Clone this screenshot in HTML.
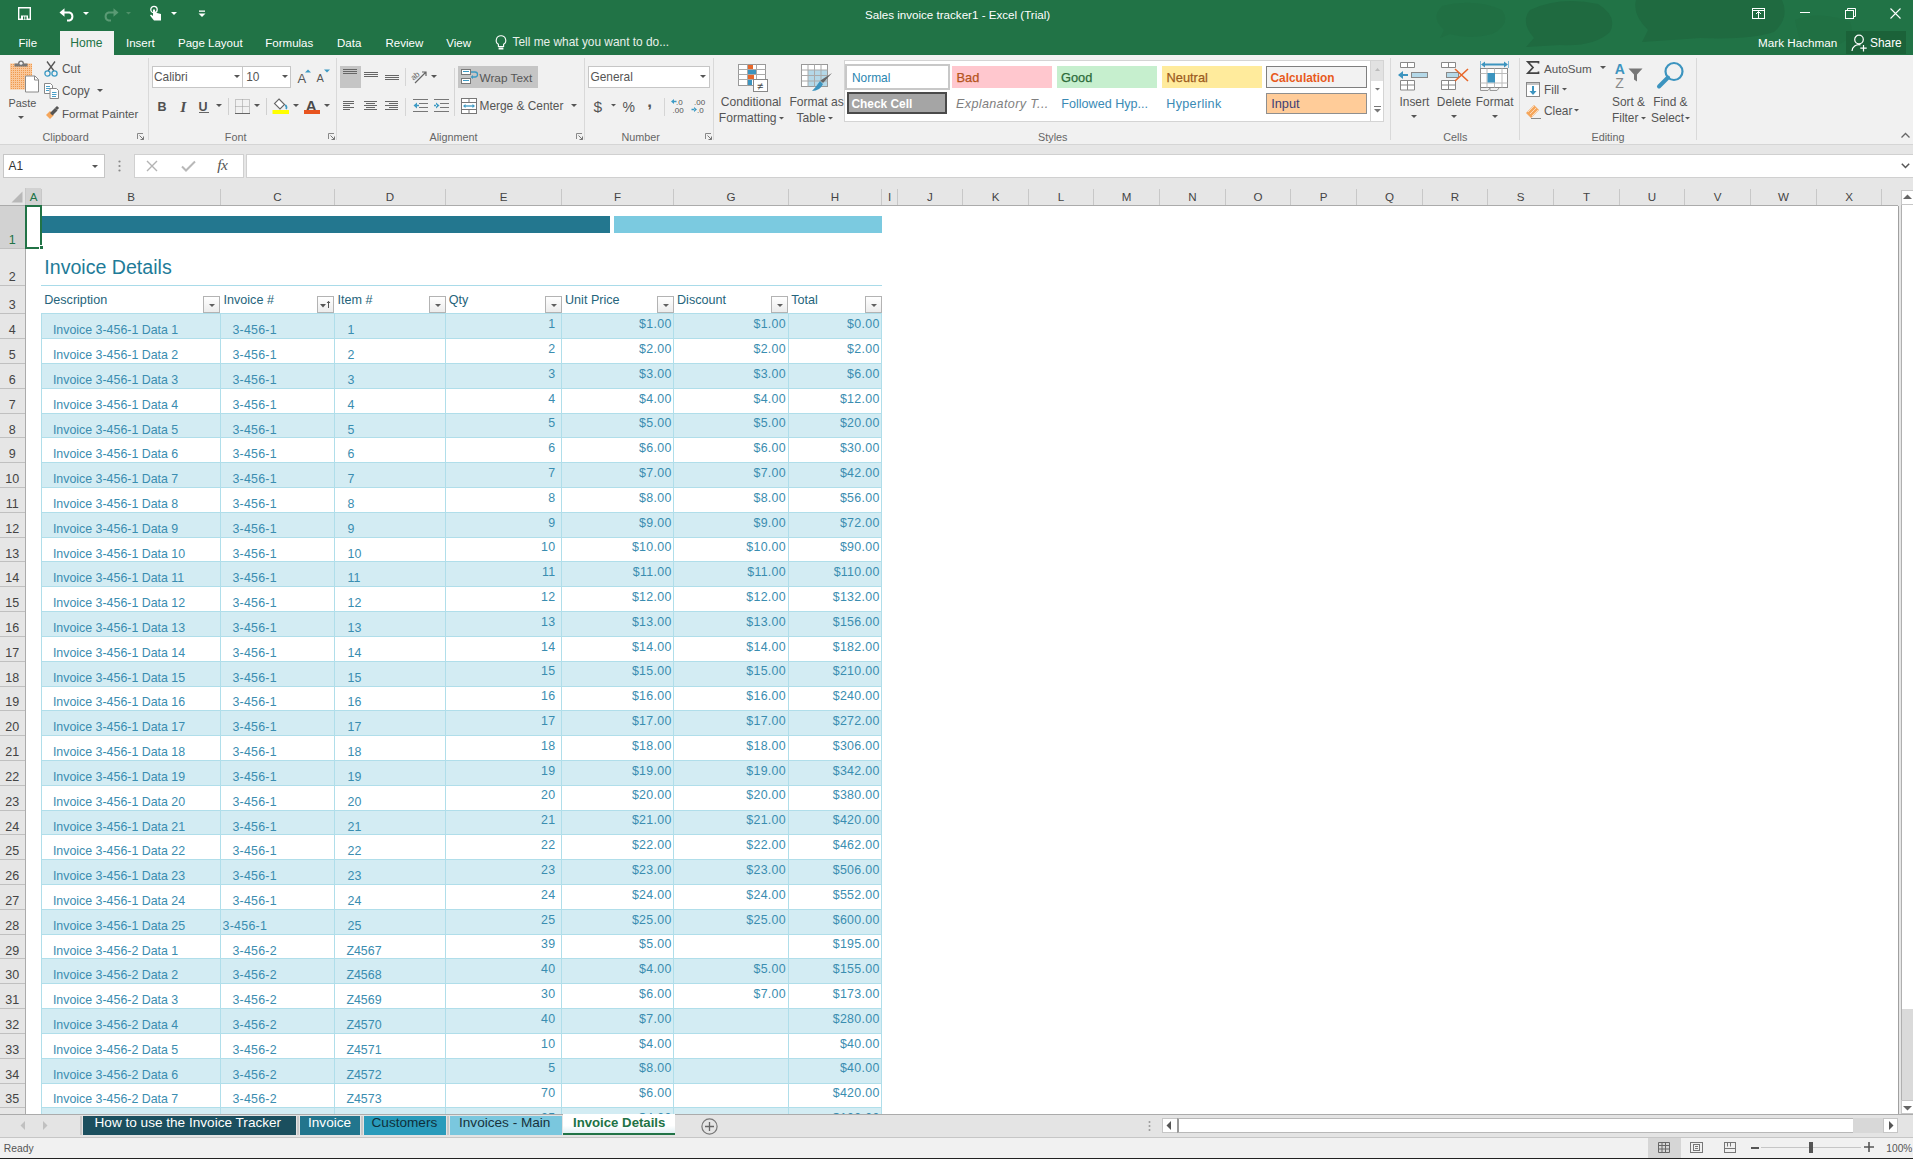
<!DOCTYPE html>
<html><head><meta charset="utf-8"><title>Excel</title>
<style>
html,body{margin:0;padding:0;}
body{width:1913px;height:1159px;position:relative;overflow:hidden;background:#fff;font-family:"Liberation Sans",sans-serif;}
.t{position:absolute;white-space:nowrap;}
.b{position:absolute;box-sizing:border-box;}
.s{position:absolute;overflow:visible;}
</style></head><body>
<div class="b" style="left:0px;top:0px;width:1913px;height:55px;background:#217346;"></div>
<svg class="s" style="left:1380px;top:0px" width="533" height="55" viewBox="0 0 533 55"><g fill="#1f6a40"><path d="M62 6Q95 -2 122 10Q132 24 112 34Q90 40 70 34L60 38L64 30Q50 18 62 6Z" opacity="0.45"/><path d="M150 10Q180 -4 218 4Q238 16 230 32Q214 47 180 45L146 47L154 38Q140 22 150 10Z" opacity="1"/><path d="M256 0H402Q410 18 394 32Q370 40 320 38L262 42L268 30Q252 14 256 0Z" opacity="1"/><path d="M415 20Q440 10 470 22Q476 36 460 44Q440 50 420 42Z" opacity="0.35"/></g></svg>
<svg class="s" style="left:18px;top:7px;" width="13" height="13" viewBox="0 0 13 13"><path d="M0.7 0.7H12.3V12.3H0.7Z" fill="none" stroke="#fff" stroke-width="1.4"/><rect x="3" y="8.5" width="7" height="4" fill="#fff"/><rect x="5" y="9.5" width="1.3" height="3" fill="#217346"/><rect x="7.2" y="9.5" width="1.3" height="3" fill="#217346"/></svg>
<svg class="s" style="left:59px;top:7px;" width="16" height="14" viewBox="0 0 16 14"><path d="M3 5.5H10.5A4.2 4.2 0 0 1 10.5 13.5H8" fill="none" stroke="#fff" stroke-width="2"/><path d="M0.5 5.5L5.5 1.2V9.8Z" fill="#fff"/></svg>
<svg class="s" style="left:82.5px;top:11.5px;" width="6" height="4" viewBox="0 0 6 4"><path d="M0 0H6L3 3Z" fill="#fff"/></svg>
<svg class="s" style="left:103px;top:7px;" width="16" height="14" viewBox="0 0 16 14"><path d="M13 5.5H5.5A4.2 4.2 0 0 0 5.5 13.5H8" fill="none" stroke="#5a9a74" stroke-width="2"/><path d="M15.5 5.5L10.5 1.2V9.8Z" fill="#5a9a74"/></svg>
<svg class="s" style="left:125.5px;top:11.75px;" width="5.0" height="3.5" viewBox="0 0 5.0 3.5"><path d="M0 0H5.0L2.5 2.5Z" fill="#4f9068"/></svg>
<svg class="s" style="left:149px;top:5px;" width="13" height="16" viewBox="0 0 13 16"><circle cx="5" cy="4.5" r="3.2" fill="none" stroke="#fff" stroke-width="1.3"/><path d="M4 4.5V11L2 9.5L1 10.5L5 15.5H12V9L6 7.5V4.5Z" fill="#fff"/></svg>
<svg class="s" style="left:170.5px;top:11.5px;" width="6" height="4" viewBox="0 0 6 4"><path d="M0 0H6L3 3Z" fill="#fff"/></svg>
<svg class="s" style="left:198px;top:10px;" width="8" height="8" viewBox="0 0 8 8"><rect x="1" y="0.5" width="6" height="1.3" fill="#fff"/><path d="M0.5 3.5H7.5L4 7Z" fill="#fff"/></svg>
<div class="t " style="left:865.00px;top:9.18px;font-size:11.6px;line-height:11.6px;color:#fff;">Sales invoice tracker1 - Excel (Trial)</div>
<svg class="s" style="left:1752px;top:8px;" width="13" height="11" viewBox="0 0 13 11"><rect x="0.5" y="0.5" width="12" height="10" fill="none" stroke="#fff" stroke-width="1"/><path d="M0.5 2.5H12.5M6.5 3.5V10.5M4 6L6.5 3.5L9 6" fill="none" stroke="#fff" stroke-width="1"/></svg>
<div class="b" style="left:1800px;top:12px;width:10px;height:1px;background:#fff;"></div>
<svg class="s" style="left:1845px;top:8px;" width="11" height="11" viewBox="0 0 11 11"><path d="M2.5 2.5V0.5H10.5V8.5H8.5" fill="none" stroke="#fff"/><rect x="0.5" y="2.5" width="8" height="8" fill="none" stroke="#fff"/></svg>
<svg class="s" style="left:1890px;top:8px;" width="11" height="11" viewBox="0 0 11 11"><path d="M0.5 0.5L10.5 10.5M10.5 0.5L0.5 10.5" stroke="#fff" stroke-width="1.1"/></svg>
<div class="b" style="left:60px;top:31px;width:54px;height:24px;background:#f1f1f1;"></div>
<div class="t " style="left:18.50px;top:37.57px;font-size:11.5px;line-height:11.5px;color:#fff;">File</div>
<div class="t " style="left:70.30px;top:37.06px;font-size:12.1px;line-height:12.1px;color:#217346;">Home</div>
<div class="t " style="left:126.00px;top:37.57px;font-size:11.5px;line-height:11.5px;color:#fff;">Insert</div>
<div class="t " style="left:178.00px;top:37.57px;font-size:11.5px;line-height:11.5px;color:#fff;">Page Layout</div>
<div class="t " style="left:265.30px;top:37.57px;font-size:11.5px;line-height:11.5px;color:#fff;">Formulas</div>
<div class="t " style="left:337.00px;top:37.57px;font-size:11.5px;line-height:11.5px;color:#fff;">Data</div>
<div class="t " style="left:385.50px;top:37.57px;font-size:11.5px;line-height:11.5px;color:#fff;">Review</div>
<div class="t " style="left:446.30px;top:37.57px;font-size:11.5px;line-height:11.5px;color:#fff;">View</div>
<svg class="s" style="left:495px;top:35px;" width="12" height="16" viewBox="0 0 12 16"><path d="M6 0.8A4.6 4.6 0 0 0 3.4 9.3V11.5H8.6V9.3A4.6 4.6 0 0 0 6 0.8Z" fill="none" stroke="#fff" stroke-width="1.1"/><rect x="3.6" y="12.5" width="4.8" height="2" fill="#fff"/></svg>
<div class="t " style="left:512.50px;top:36.93px;font-size:11.9px;line-height:11.9px;color:#e8f0ea;">Tell me what you want to do...</div>
<div class="t " style="left:1758.00px;top:37.10px;font-size:11.7px;line-height:11.7px;color:#fff;">Mark Hachman</div>
<div class="b" style="left:1846px;top:31px;width:60px;height:23px;background:#1b6239;"></div>
<svg class="s" style="left:1851px;top:34px;" width="17" height="18" viewBox="0 0 17 18"><circle cx="8" cy="5.5" r="4.3" fill="none" stroke="#fff" stroke-width="1.2"/><path d="M1 17A7 6.5 0 0 1 9.5 10.8" fill="none" stroke="#fff" stroke-width="1.2"/><path d="M12.5 11V17.5M9.3 14.2H15.7" stroke="#fff" stroke-width="1.2"/></svg>
<div class="t " style="left:1870.00px;top:37.93px;font-size:11.9px;line-height:11.9px;color:#fff;">Share</div>
<div class="b" style="left:0px;top:55px;width:1913px;height:90px;background:#f1f1f1;"></div>
<div class="b" style="left:0px;top:144px;width:1913px;height:1px;background:#d5d5d5;"></div>
<div class="b" style="left:148px;top:58px;width:1px;height:82px;background:#d9d9d9;"></div>
<div class="b" style="left:336px;top:58px;width:1px;height:82px;background:#d9d9d9;"></div>
<div class="b" style="left:584px;top:58px;width:1px;height:82px;background:#d9d9d9;"></div>
<div class="b" style="left:713px;top:58px;width:1px;height:82px;background:#d9d9d9;"></div>
<div class="b" style="left:1390px;top:58px;width:1px;height:82px;background:#d9d9d9;"></div>
<div class="b" style="left:1519px;top:58px;width:1px;height:82px;background:#d9d9d9;"></div>
<div class="b" style="left:1696px;top:58px;width:1px;height:82px;background:#d9d9d9;"></div>
<div class="t " style="left:42.50px;top:131.86px;font-size:10.8px;line-height:10.8px;color:#666;">Clipboard</div>
<div class="t " style="left:224.80px;top:131.86px;font-size:10.8px;line-height:10.8px;color:#666;">Font</div>
<div class="t " style="left:429.50px;top:131.86px;font-size:10.8px;line-height:10.8px;color:#666;">Alignment</div>
<div class="t " style="left:621.40px;top:131.86px;font-size:10.8px;line-height:10.8px;color:#666;">Number</div>
<div class="t " style="left:1038.10px;top:131.86px;font-size:10.8px;line-height:10.8px;color:#666;">Styles</div>
<div class="t " style="left:1443.30px;top:131.86px;font-size:10.8px;line-height:10.8px;color:#666;">Cells</div>
<div class="t " style="left:1591.50px;top:131.86px;font-size:10.8px;line-height:10.8px;color:#666;">Editing</div>
<svg class="s" style="left:136.5px;top:132.5px;" width="7" height="7" viewBox="0 0 7 7"><path d="M0.5 6V0.5H6" fill="none" stroke="#888" stroke-width="1"/><path d="M2.5 2.5L6.5 6.5M6.5 3.5V6.5H3.5" fill="none" stroke="#777" stroke-width="1"/></svg>
<svg class="s" style="left:327.5px;top:132.5px;" width="7" height="7" viewBox="0 0 7 7"><path d="M0.5 6V0.5H6" fill="none" stroke="#888" stroke-width="1"/><path d="M2.5 2.5L6.5 6.5M6.5 3.5V6.5H3.5" fill="none" stroke="#777" stroke-width="1"/></svg>
<svg class="s" style="left:575.5px;top:132.5px;" width="7" height="7" viewBox="0 0 7 7"><path d="M0.5 6V0.5H6" fill="none" stroke="#888" stroke-width="1"/><path d="M2.5 2.5L6.5 6.5M6.5 3.5V6.5H3.5" fill="none" stroke="#777" stroke-width="1"/></svg>
<svg class="s" style="left:704.5px;top:132.5px;" width="7" height="7" viewBox="0 0 7 7"><path d="M0.5 6V0.5H6" fill="none" stroke="#888" stroke-width="1"/><path d="M2.5 2.5L6.5 6.5M6.5 3.5V6.5H3.5" fill="none" stroke="#777" stroke-width="1"/></svg>
<svg class="s" style="left:9px;top:60px" width="30" height="33" viewBox="0 0 30 33"><defs><pattern id="dots" width="2" height="2" patternUnits="userSpaceOnUse"><rect width="2" height="2" fill="#f9c79a"/><rect width="1" height="1" fill="#f09a4e"/></pattern></defs><rect x="1" y="3.5" width="22" height="26" fill="url(#dots)"/><path d="M5.5 6.5V3.5H9A3 3 0 0 1 15 3.5H18.5V6.5Z" fill="#777"/><circle cx="12" cy="3.2" r="1.5" fill="#f1f1f1"/><path d="M16.5 16H26L29.5 19.5V32H16.5Z" fill="#fff" stroke="#8a8a8a" stroke-width="1"/><path d="M25.5 16V20H29.5" fill="none" stroke="#8a8a8a" stroke-width="1"/></svg>
<div class="t " style="left:8.40px;top:97.57px;font-size:10.9px;line-height:10.9px;color:#555555;">Paste</div>
<svg class="s" style="left:18px;top:115.5px;" width="6" height="4" viewBox="0 0 6 4"><path d="M0 0H6L3 3Z" fill="#555"/></svg>
<svg class="s" style="left:44px;top:61px;" width="14" height="16" viewBox="0 0 14 16"><path d="M3 0.5L10 10M11 0.5L4 10" stroke="#555" stroke-width="1.3" fill="none"/><circle cx="3.5" cy="12.5" r="2.6" fill="none" stroke="#3c9ac4" stroke-width="1.3"/><circle cx="10.5" cy="12.5" r="2.6" fill="none" stroke="#3c9ac4" stroke-width="1.3"/></svg>
<div class="t " style="left:62.00px;top:64.03px;font-size:11.9px;line-height:11.9px;color:#555555;">Cut</div>
<svg class="s" style="left:44px;top:83px;" width="15" height="16" viewBox="0 0 15 16"><path d="M0.5 0.5H6.5L8.5 2.5V10.5H0.5Z" fill="#fff" stroke="#888"/><path d="M6 5.5H12.5L14.5 7.5V15.5H6Z" fill="#fff" stroke="#888"/><path d="M2 3.5H6M2 5.5H6M2 7.5H5M8 9.5H12.5M8 11.5H12.5M8 13.5H12" stroke="#4a9fc8" stroke-width="1"/></svg>
<div class="t " style="left:62.00px;top:86.03px;font-size:11.9px;line-height:11.9px;color:#555555;">Copy</div>
<svg class="s" style="left:96.7px;top:89.1px;" width="6" height="4" viewBox="0 0 6 4"><path d="M0 0H6L3 3Z" fill="#555"/></svg>
<svg class="s" style="left:45px;top:106px;" width="14" height="14" viewBox="0 0 14 14"><path d="M1 9L5 5L9 9L5 13Z" fill="#f5a65b"/><path d="M5 7L10 2L12.5 4.5L7.5 9.5Z" fill="#555"/><rect x="10.5" y="0.5" width="3" height="3" fill="#555" transform="rotate(45 12 2)"/></svg>
<div class="t " style="left:62.00px;top:109.22px;font-size:11.55px;line-height:11.55px;color:#555555;">Format Painter</div>
<div class="b" style="left:152px;top:66px;width:91px;height:22px;background:#fff;border:1px solid #c6c6c6;"></div>
<div class="b" style="left:242px;top:66px;width:49px;height:22px;background:#fff;border:1px solid #c6c6c6;"></div>
<div class="t " style="left:154.00px;top:72.43px;font-size:11.9px;line-height:11.9px;color:#555555;">Calibri</div>
<svg class="s" style="left:233.7px;top:74.7px;" width="6" height="4" viewBox="0 0 6 4"><path d="M0 0H6L3 3Z" fill="#555"/></svg>
<div class="t " style="left:246.20px;top:72.43px;font-size:11.9px;line-height:11.9px;color:#555555;">10</div>
<svg class="s" style="left:281.7px;top:74.7px;" width="6" height="4" viewBox="0 0 6 4"><path d="M0 0H6L3 3Z" fill="#555"/></svg>
<div class="t " style="left:297.50px;top:71.80px;font-size:13px;line-height:13px;color:#555;">A</div>
<svg class="s" style="left:305px;top:69px;" width="6" height="4" viewBox="0 0 6 4"><path d="M0 3.5H6L3 0.5Z" fill="#3c9ac4"/></svg>
<div class="t " style="left:316.50px;top:73.49px;font-size:11px;line-height:11px;color:#555;">A</div>
<svg class="s" style="left:324px;top:69px;" width="6" height="4" viewBox="0 0 6 4"><path d="M0 0.5H6L3 3.5Z" fill="#3c9ac4"/></svg>
<div class="t " style="left:157.50px;top:100.72px;font-size:12.5px;line-height:12.5px;color:#505050;font-weight:bold;">B</div>
<div class="t " style="left:180.30px;top:98.68px;font-size:15.5px;line-height:15.5px;color:#505050;font-weight:bold;font-family:'Liberation Serif',serif;font-style:italic;">I</div>
<div class="t " style="left:198.50px;top:100.72px;font-size:12.5px;line-height:12.5px;color:#505050;font-weight:bold;">U</div>
<div class="b" style="left:198.5px;top:112px;width:10px;height:1px;background:#666;"></div>
<svg class="s" style="left:216.2px;top:104.0px;" width="6" height="4" viewBox="0 0 6 4"><path d="M0 0H6L3 3Z" fill="#555"/></svg>
<div class="b" style="left:228px;top:98px;width:1px;height:17px;background:#d0d0d0;"></div>
<svg class="s" style="left:235px;top:99px;" width="15" height="15" viewBox="0 0 15 15"><rect x="0.5" y="0.5" width="14" height="14" fill="none" stroke="#999" stroke-dasharray="1 1"/><path d="M7.5 0.5V14.5M0.5 7.5H14.5" stroke="#999" stroke-dasharray="1 1"/><path d="M0 14.5H15" stroke="#666"/></svg>
<svg class="s" style="left:254.39999999999998px;top:104.0px;" width="6" height="4" viewBox="0 0 6 4"><path d="M0 0H6L3 3Z" fill="#555"/></svg>
<div class="b" style="left:266px;top:98px;width:1px;height:17px;background:#d0d0d0;"></div>
<svg class="s" style="left:272px;top:97px;" width="18" height="18" viewBox="0 0 18 18"><path d="M7 2L12.5 7.5L8 12L2.5 6.5Z" fill="#fff" stroke="#666" stroke-width="1.1"/><path d="M13.2 7.8Q15.5 10 14 12" fill="none" stroke="#3c9ac4" stroke-width="1.6"/><rect x="0.5" y="13" width="16.5" height="4" fill="#ffff00"/></svg>
<svg class="s" style="left:293px;top:104.0px;" width="6" height="4" viewBox="0 0 6 4"><path d="M0 0H6L3 3Z" fill="#555"/></svg>
<div class="t " style="left:305.80px;top:97.70px;font-size:15px;line-height:15px;color:#4a4a4a;font-weight:bold;">A</div>
<div class="b" style="left:304px;top:110px;width:16px;height:4px;background:#e8541f;"></div>
<svg class="s" style="left:324px;top:104.0px;" width="6" height="4" viewBox="0 0 6 4"><path d="M0 0H6L3 3Z" fill="#555"/></svg>
<div class="b" style="left:340px;top:66px;width:21px;height:22px;background:#c5c5c5;"></div>
<svg class="s" style="left:343px;top:69px;" width="16" height="7" viewBox="0 0 16 7"><rect x="0" y="0" width="14" height="1" fill="#666"/><rect x="0" y="2" width="14" height="1" fill="#666"/><rect x="0" y="4" width="14" height="1" fill="#666"/></svg>
<svg class="s" style="left:364px;top:72px;" width="16" height="7" viewBox="0 0 16 7"><rect x="0" y="0" width="14" height="1" fill="#666"/><rect x="0" y="2" width="14" height="1" fill="#666"/><rect x="0" y="4" width="14" height="1" fill="#666"/></svg>
<svg class="s" style="left:385px;top:75px;" width="16" height="7" viewBox="0 0 16 7"><rect x="0" y="0" width="14" height="1" fill="#666"/><rect x="0" y="2" width="14" height="1" fill="#666"/><rect x="0" y="4" width="14" height="1" fill="#666"/></svg>
<svg class="s" style="left:343px;top:101px;" width="16" height="11" viewBox="0 0 16 11"><rect x="0" y="0" width="11" height="1" fill="#666"/><rect x="0" y="2" width="11" height="1" fill="#666"/><rect x="0" y="4" width="7" height="1" fill="#666"/><rect x="0" y="6" width="11" height="1" fill="#666"/><rect x="0" y="8" width="7" height="1" fill="#666"/></svg>
<svg class="s" style="left:364px;top:101px;" width="16" height="11" viewBox="0 0 16 11"><rect x="0" y="0" width="13" height="1" fill="#666"/><rect x="2" y="2" width="9" height="1" fill="#666"/><rect x="0" y="4" width="13" height="1" fill="#666"/><rect x="2" y="6" width="9" height="1" fill="#666"/><rect x="0" y="8" width="13" height="1" fill="#666"/></svg>
<svg class="s" style="left:385px;top:101px;" width="16" height="11" viewBox="0 0 16 11"><rect x="0" y="0" width="13" height="1" fill="#666"/><rect x="4" y="2" width="9" height="1" fill="#666"/><rect x="0" y="4" width="13" height="1" fill="#666"/><rect x="4" y="6" width="9" height="1" fill="#666"/><rect x="0" y="8" width="13" height="1" fill="#666"/></svg>
<div class="b" style="left:405px;top:68px;width:1px;height:18px;background:#d5d5d5;"></div>
<div class="b" style="left:405px;top:98px;width:1px;height:18px;background:#d5d5d5;"></div>
<svg class="s" style="left:411px;top:68px;" width="17" height="16" viewBox="0 0 17 16"><text x="0" y="10" font-size="8" fill="#666" transform="rotate(-40 5 8)" font-family="Liberation Sans">ab</text><path d="M4 15L15 4M11 4H15V8" fill="none" stroke="#666" stroke-width="1.2"/></svg>
<svg class="s" style="left:430.7px;top:74.7px;" width="6" height="4" viewBox="0 0 6 4"><path d="M0 0H6L3 3Z" fill="#555"/></svg>
<svg class="s" style="left:413px;top:99px;" width="15" height="14" viewBox="0 0 15 14"><path d="M0 0.5H15M6 4.5H15M6 8.5H15M0 12.5H15" stroke="#777"/><path d="M0.5 6.5L4 3.5V9.5Z M3 5.8H6V7.2H3Z" fill="#3c9ac4"/></svg>
<svg class="s" style="left:433.5px;top:99px;" width="15" height="14" viewBox="0 0 15 14"><path d="M0 0.5H15M6 4.5H15M6 8.5H15M0 12.5H15" stroke="#777"/><path d="M5.5 6.5L2 3.5V9.5Z M0 5.8H3V7.2H0Z" fill="#3c9ac4"/></svg>
<div class="b" style="left:454px;top:68px;width:1px;height:48px;background:#d5d5d5;"></div>
<div class="b" style="left:458px;top:66px;width:80px;height:22px;background:#c5c5c5;"></div>
<svg class="s" style="left:461px;top:69px;" width="16" height="16" viewBox="0 0 16 16"><rect x="0.5" y="0.5" width="9" height="5" fill="#fff" stroke="#777"/><rect x="0.5" y="9.5" width="9" height="5" fill="#fff" stroke="#777"/><path d="M2 2.5H8M2 11.5H8" stroke="#3c9ac4"/><path d="M10 3H14A2.5 2.5 0 0 1 14 8H11" fill="none" stroke="#3c9ac4" stroke-width="1.3"/><path d="M9.5 8L12 6V10Z" fill="#3c9ac4"/></svg>
<div class="t " style="left:479.50px;top:72.51px;font-size:11.8px;line-height:11.8px;color:#555555;">Wrap Text</div>
<svg class="s" style="left:461px;top:98px;" width="16" height="16" viewBox="0 0 16 16"><rect x="0.5" y="0.5" width="15" height="15" fill="#fff" stroke="#777"/><path d="M0.5 4.5H15.5M0.5 11.5H15.5M8 0.5V4.5M8 11.5V15.5" stroke="#777"/><path d="M3 8H13" stroke="#3c9ac4" stroke-width="1.3"/><path d="M2 8L4.5 6V10ZM14 8L11.5 6V10Z" fill="#3c9ac4"/></svg>
<div class="t " style="left:479.50px;top:101.23px;font-size:11.9px;line-height:11.9px;color:#555555;">Merge &amp; Center</div>
<svg class="s" style="left:571.3px;top:104.0px;" width="6" height="4" viewBox="0 0 6 4"><path d="M0 0H6L3 3Z" fill="#555"/></svg>
<div class="b" style="left:588px;top:66px;width:122px;height:22px;background:#fff;border:1px solid #c6c6c6;"></div>
<div class="t " style="left:590.50px;top:72.43px;font-size:11.9px;line-height:11.9px;color:#555555;">General</div>
<svg class="s" style="left:699.8px;top:74.7px;" width="6" height="4" viewBox="0 0 6 4"><path d="M0 0H6L3 3Z" fill="#555"/></svg>
<div class="t " style="left:593.50px;top:98.98px;font-size:15.5px;line-height:15.5px;color:#555;">$</div>
<svg class="s" style="left:611.0px;top:104.25px;" width="5.0" height="3.5" viewBox="0 0 5.0 3.5"><path d="M0 0H5.0L2.5 2.5Z" fill="#555"/></svg>
<div class="t " style="left:622.50px;top:99.55px;font-size:14px;line-height:14px;color:#555;">%</div>
<div class="t " style="left:647.30px;top:92.71px;font-size:17px;line-height:17px;color:#555;font-weight:bold;">,</div>
<div class="b" style="left:664px;top:98px;width:1px;height:18px;background:#d5d5d5;"></div>
<svg class="s" style="left:670px;top:97px;" width="16" height="17" viewBox="0 0 16 17"><text x="6" y="7.5" font-size="8" fill="#555" font-family="Liberation Sans">.0</text><text x="2.5" y="15.5" font-size="8" fill="#555" font-family="Liberation Sans">.00</text><path d="M1 4.5L4 2V7Z M3.5 3.8H6.5V5.2H3.5Z" fill="#3c9ac4"/></svg>
<svg class="s" style="left:691px;top:97px;" width="16" height="17" viewBox="0 0 16 17"><text x="3" y="7.5" font-size="8" fill="#555" font-family="Liberation Sans">.00</text><text x="6" y="15.5" font-size="8" fill="#555" font-family="Liberation Sans">.0</text><path d="M6 12.5L3 10V15Z M0.5 11.8H3.5V13.2H0.5Z" fill="#3c9ac4"/></svg>
<svg class="s" style="left:738px;top:64px;" width="31" height="29" viewBox="0 0 31 29"><rect x="0.5" y="0.5" width="27" height="21" fill="#fff" stroke="#999"/><path d="M0.5 5.5H27.5M0.5 10.5H27.5M0.5 15.5H27.5M9.5 0.5V21.5M18.5 0.5V21.5" stroke="#aaa"/><rect x="10" y="1" width="5" height="4" fill="#e8672a"/><rect x="10" y="6" width="8" height="4" fill="#3c94bf"/><rect x="10" y="11" width="6" height="4" fill="#e8672a"/><rect x="10" y="16" width="4" height="5" fill="#3c94bf"/><rect x="15.5" y="15.5" width="14" height="12" fill="#fff" stroke="#888"/><text x="19" y="25.5" font-size="11" fill="#444" font-family="Liberation Sans">&#8800;</text></svg>
<div class="t " style="left:720.80px;top:95.86px;font-size:12.1px;line-height:12.1px;color:#555555;">Conditional</div>
<div class="t " style="left:718.80px;top:111.76px;font-size:12.1px;line-height:12.1px;color:#555555;">Formatting</div>
<svg class="s" style="left:779.0px;top:116.75px;" width="5.0" height="3.5" viewBox="0 0 5.0 3.5"><path d="M0 0H5.0L2.5 2.5Z" fill="#555"/></svg>
<svg class="s" style="left:801px;top:64px;" width="32" height="29" viewBox="0 0 32 29"><rect x="0.5" y="0.5" width="26" height="22" fill="#fff" stroke="#999"/><rect x="7" y="6" width="19" height="16" fill="#b4d8e8"/><path d="M0.5 6H26.5M0.5 11.5H26.5M0.5 17H26.5M7 0.5V22.5M13.5 0.5V22.5M20 0.5V22.5" stroke="#aaa"/><path d="M31 9L22 19L19.5 16.5Z" fill="#666"/><path d="M19 17L22 20Q19 27 11 27Q15 23 19 17Z" fill="#3c94bf"/></svg>
<div class="t " style="left:789.40px;top:95.86px;font-size:12.1px;line-height:12.1px;color:#555555;">Format as</div>
<div class="t " style="left:796.50px;top:111.76px;font-size:12.1px;line-height:12.1px;color:#555555;">Table</div>
<svg class="s" style="left:828.0px;top:116.75px;" width="5.0" height="3.5" viewBox="0 0 5.0 3.5"><path d="M0 0H5.0L2.5 2.5Z" fill="#555"/></svg>
<div class="b" style="left:844px;top:60px;width:540px;height:62px;background:#fff;border:1px solid #d4d4d4;"></div>
<div class="b" style="left:845px;top:64px;width:105px;height:26px;background:#fff;border:2px solid #c8c8c8;"></div>
<div class="t " style="left:852.00px;top:72.53px;font-size:11.9px;line-height:11.9px;color:#2a85b0;">Normal</div>
<div class="b" style="left:952px;top:66px;width:100px;height:22px;background:#ffc7ce;"></div>
<div class="t " style="left:956.50px;top:71.76px;font-size:12.8px;line-height:12.8px;color:#b5541c;-webkit-text-stroke:0.25px #b5541c;">Bad</div>
<div class="b" style="left:1057px;top:66px;width:100px;height:22px;background:#c6efce;"></div>
<div class="t " style="left:1061.00px;top:71.76px;font-size:12.8px;line-height:12.8px;color:#2c6b3a;-webkit-text-stroke:0.25px #2c6b3a;">Good</div>
<div class="b" style="left:1162px;top:66px;width:100px;height:22px;background:#ffeb9c;"></div>
<div class="t " style="left:1166.60px;top:71.76px;font-size:12.8px;line-height:12.8px;color:#9c5b1e;-webkit-text-stroke:0.25px #9c5b1e;">Neutral</div>
<div class="b" style="left:1266px;top:66px;width:101px;height:22px;background:#f2f2f2;border:1px solid #7f7f7f;"></div>
<div class="t " style="left:1270.50px;top:72.53px;font-size:11.9px;line-height:11.9px;color:#e85a1c;font-weight:bold;">Calculation</div>
<div class="b" style="left:847px;top:92px;width:100px;height:22px;background:#a5a5a5;border:2px solid #4a4a4a;"></div>
<div class="t " style="left:851.50px;top:98.73px;font-size:11.9px;line-height:11.9px;color:#fff;font-weight:bold;">Check Cell</div>
<div class="t " style="left:956.00px;top:98.33px;font-size:12.6px;line-height:12.6px;color:#7f7f7f;font-style:italic;letter-spacing:0.35px;">Explanatory T...</div>
<div class="t " style="left:1061.30px;top:98.33px;font-size:12.6px;line-height:12.6px;color:#3a8ab5;">Followed Hyp...</div>
<div class="t " style="left:1166.30px;top:98.33px;font-size:12.6px;line-height:12.6px;color:#3a8ab5;letter-spacing:0.3px;">Hyperlink</div>
<div class="b" style="left:1266px;top:93px;width:101px;height:21px;background:#ffcc99;border:1px solid #8f8f8f;"></div>
<div class="t " style="left:1271.20px;top:98.46px;font-size:12.8px;line-height:12.8px;color:#3f3f76;">Input</div>
<div class="b" style="left:1370px;top:60px;width:14px;height:62px;background:#fff;border:1px solid #d4d4d4;"></div>
<div class="b" style="left:1371px;top:61px;width:12px;height:20px;background:#e2e2e2;"></div>
<svg class="s" style="left:1374.5px;top:88.25px;" width="5.0" height="3.5" viewBox="0 0 5.0 3.5"><path d="M0 0H5.0L2.5 2.5Z" fill="#777"/></svg>
<svg class="s" style="left:1374px;top:106px;" width="7" height="7" viewBox="0 0 7 7"><rect x="0" y="0" width="7" height="1" fill="#777"/><path d="M0 3H7L3.5 6.5Z" fill="#777"/></svg>
<svg class="s" style="left:1375px;top:68px;" width="5" height="3" viewBox="0 0 5 3"><path d="M0 3H5L2.5 0Z" fill="#bbb"/></svg>
<svg class="s" style="left:1398px;top:62px;" width="31" height="28" viewBox="0 0 31 28"><path d="M2.5 0.5H16.5V5.5H2.5ZM9.5 0.5V5.5M2.5 18.5H16.5V28H2.5ZM2.5 23H16.5M9.5 18.5V28" fill="#fff" stroke="#888"/><rect x="13.5" y="10.5" width="16" height="5" fill="#b4d8e8" stroke="#888"/><path d="M1 13H10" stroke="#3c94bf" stroke-width="2"/><path d="M0 13L5 9V17Z" fill="#3c94bf"/></svg>
<div class="t " style="left:1399.50px;top:96.73px;font-size:11.9px;line-height:11.9px;color:#555555;">Insert</div>
<svg class="s" style="left:1410.8px;top:115.1px;" width="6" height="4" viewBox="0 0 6 4"><path d="M0 0H6L3 3Z" fill="#555"/></svg>
<svg class="s" style="left:1440px;top:62px;" width="30" height="28" viewBox="0 0 30 28"><path d="M1.5 0.5H15.5V5.5H1.5ZM8.5 0.5V5.5M1.5 18.5H15.5V27.5H1.5ZM1.5 23H15.5M8.5 18.5V27.5" fill="#fff" stroke="#888"/><rect x="6.5" y="10.5" width="12" height="5" fill="#b4d8e8" stroke="#888"/><path d="M15 7L28 19M28 7L15 19" stroke="#e8672a" stroke-width="1.6"/></svg>
<div class="t " style="left:1436.80px;top:96.73px;font-size:11.9px;line-height:11.9px;color:#555555;">Delete</div>
<svg class="s" style="left:1450.7px;top:115.1px;" width="6" height="4" viewBox="0 0 6 4"><path d="M0 0H6L3 3Z" fill="#555"/></svg>
<svg class="s" style="left:1480px;top:60px;" width="29" height="31" viewBox="0 0 29 31"><path d="M3 4.5H26" stroke="#3c94bf" stroke-width="2"/><path d="M1 4.5L5 1.5V7.5ZM28 4.5L24 1.5V7.5Z" fill="#3c94bf"/><path d="M0.5 1V8M28.5 1V8" stroke="#7fb9d6"/><rect x="0.5" y="8.5" width="27" height="19" fill="#fff" stroke="#888"/><path d="M0.5 13.5H27.5M0.5 23H27.5M7 8.5V27.5M14.5 8.5V27.5M22 8.5V27.5" stroke="#bbb"/><rect x="7.5" y="13" width="7.5" height="9.5" fill="#3c94bf"/><path d="M0.5 27.5V30.5H8L10 28M10 28V30.5H17L19 28" fill="none" stroke="#999"/></svg>
<div class="t " style="left:1475.80px;top:96.73px;font-size:11.9px;line-height:11.9px;color:#555555;">Format</div>
<svg class="s" style="left:1491.5px;top:115.1px;" width="6" height="4" viewBox="0 0 6 4"><path d="M0 0H6L3 3Z" fill="#555"/></svg>
<svg class="s" style="left:1527px;top:61px;" width="12" height="13" viewBox="0 0 12 13"><path d="M11.5 2.6V0.8H0.8L6 6.5L0.8 12.2H11.5V10.4" fill="none" stroke="#444" stroke-width="1.7" stroke-linejoin="miter"/></svg>
<div class="t " style="left:1544.00px;top:63.18px;font-size:11.6px;line-height:11.6px;color:#555555;">AutoSum</div>
<svg class="s" style="left:1599.6px;top:66.0px;" width="6" height="4" viewBox="0 0 6 4"><path d="M0 0H6L3 3Z" fill="#555"/></svg>
<svg class="s" style="left:1526px;top:82px;" width="14" height="15" viewBox="0 0 14 15"><rect x="0.5" y="0.5" width="13" height="14" fill="#fff" stroke="#888"/><path d="M0.5 2H13.5" stroke="#888"/><path d="M7 4V11" stroke="#3c94bf" stroke-width="2"/><path d="M3.5 9H10.5L7 13Z" fill="#3c94bf"/></svg>
<div class="t " style="left:1544.00px;top:84.73px;font-size:11.9px;line-height:11.9px;color:#555555;">Fill</div>
<svg class="s" style="left:1561.7px;top:87.75px;" width="5.0" height="3.5" viewBox="0 0 5.0 3.5"><path d="M0 0H5.0L2.5 2.5Z" fill="#555"/></svg>
<svg class="s" style="left:1525px;top:103px;" width="17" height="16" viewBox="0 0 17 16"><path d="M1 10L9 2L14 7L6 15Z" fill="#f5a65b"/><path d="M3 9L9 3M5 11L11 5M7 13L13 7" stroke="#fff" stroke-width="0.6"/><path d="M6 15.5H16" stroke="#888"/></svg>
<div class="t " style="left:1544.00px;top:106.03px;font-size:11.9px;line-height:11.9px;color:#555555;">Clear</div>
<svg class="s" style="left:1573.9px;top:109.05px;" width="5.0" height="3.5" viewBox="0 0 5.0 3.5"><path d="M0 0H5.0L2.5 2.5Z" fill="#555"/></svg>
<div class="t " style="left:1614.80px;top:61.55px;font-size:14px;line-height:14px;color:#3c94bf;font-weight:bold;">A</div>
<div class="t " style="left:1615.30px;top:75.55px;font-size:14px;line-height:14px;color:#888;">Z</div>
<svg class="s" style="left:1628px;top:68px;" width="15" height="14" viewBox="0 0 15 14"><path d="M0.5 0.5H14.5L9 6.5V13.5L6 11.5V6.5Z" fill="#777"/></svg>
<div class="t " style="left:1612.00px;top:96.73px;font-size:11.9px;line-height:11.9px;color:#555555;">Sort &amp;</div>
<div class="t " style="left:1612.00px;top:112.73px;font-size:11.9px;line-height:11.9px;color:#555555;">Filter</div>
<svg class="s" style="left:1640.5px;top:116.75px;" width="5.0" height="3.5" viewBox="0 0 5.0 3.5"><path d="M0 0H5.0L2.5 2.5Z" fill="#555"/></svg>
<svg class="s" style="left:1656px;top:61px;" width="29" height="29" viewBox="0 0 29 29"><circle cx="18" cy="10.5" r="8.5" fill="none" stroke="#3c94bf" stroke-width="2.2"/><path d="M12 16.5L3 25.5" stroke="#3c94bf" stroke-width="4" stroke-linecap="round"/></svg>
<div class="t " style="left:1653.20px;top:96.73px;font-size:11.9px;line-height:11.9px;color:#555555;">Find &amp;</div>
<div class="t " style="left:1651.00px;top:112.73px;font-size:11.9px;line-height:11.9px;color:#555555;">Select</div>
<svg class="s" style="left:1685.0px;top:116.75px;" width="5.0" height="3.5" viewBox="0 0 5.0 3.5"><path d="M0 0H5.0L2.5 2.5Z" fill="#555"/></svg>
<svg class="s" style="left:1901px;top:132px;" width="9" height="6" viewBox="0 0 9 6"><path d="M0.5 5.5L4.5 1.5L8.5 5.5" fill="none" stroke="#666" stroke-width="1.3"/></svg>
<div class="b" style="left:0px;top:145px;width:1913px;height:43px;background:#e6e6e6;"></div>
<div class="b" style="left:3px;top:154px;width:102px;height:24px;background:#fff;border:1px solid #c6c6c6;"></div>
<div class="t " style="left:8.50px;top:161.43px;font-size:11.9px;line-height:11.9px;color:#333;">A1</div>
<svg class="s" style="left:91.5px;top:164.5px;" width="6" height="4" viewBox="0 0 6 4"><path d="M0 0H6L3 3Z" fill="#555"/></svg>
<svg class="s" style="left:118px;top:160px;" width="3" height="12" viewBox="0 0 3 12"><circle cx="1.5" cy="1.5" r="1.1" fill="#888"/><circle cx="1.5" cy="6" r="1.1" fill="#888"/><circle cx="1.5" cy="10.5" r="1.1" fill="#888"/></svg>
<div class="b" style="left:134px;top:154px;width:110px;height:24px;background:#fff;border:1px solid #d0d0d0;"></div>
<svg class="s" style="left:146px;top:160px;" width="12" height="12" viewBox="0 0 12 12"><path d="M1 1L11 11M11 1L1 11" stroke="#b3b3b3" stroke-width="1.4"/></svg>
<svg class="s" style="left:181px;top:160px;" width="15" height="12" viewBox="0 0 15 12"><path d="M1 6.5L5 10.5L14 1.5" fill="none" stroke="#b8b8b8" stroke-width="2"/></svg>
<div class="t " style="left:217.30px;top:157.48px;font-size:15.5px;line-height:15.5px;color:#555;font-family:'Liberation Serif',serif;font-style:italic;letter-spacing:-0.5px;">fx</div>
<div class="b" style="left:246px;top:154px;width:1667px;height:24px;background:#fff;border:1px solid #d0d0d0;border-right:none;"></div>
<svg class="s" style="left:1901px;top:163px;" width="9" height="6" viewBox="0 0 9 6"><path d="M0.8 0.8L4.5 4.5L8.2 0.8" fill="none" stroke="#555" stroke-width="1.5"/></svg>
<div class="b" style="left:0px;top:188px;width:1898px;height:18px;background:#e6e6e6;"></div>
<div class="b" style="left:0px;top:205px;width:1898px;height:1px;background:#ababab;"></div>
<svg class="s" style="left:11px;top:191px;" width="12" height="12" viewBox="0 0 12 12"><path d="M11.5 0.5V11.5H0.5Z" fill="#b8b8b8"/></svg>
<div class="b" style="left:26px;top:188px;width:15px;height:17px;background:#d2d2d2;"></div>
<div class="b" style="left:41px;top:189px;width:1px;height:16px;background:#c8c8c8;"></div>
<div class="t" style="left:-166.50px;width:400px;text-align:center;top:191.48px;font-size:11.6px;line-height:11.6px;color:#217346;">A</div>
<div class="b" style="left:220px;top:189px;width:1px;height:16px;background:#c8c8c8;"></div>
<div class="t" style="left:-69.00px;width:400px;text-align:center;top:191.48px;font-size:11.6px;line-height:11.6px;color:#444;">B</div>
<div class="b" style="left:334px;top:189px;width:1px;height:16px;background:#c8c8c8;"></div>
<div class="t" style="left:77.50px;width:400px;text-align:center;top:191.48px;font-size:11.6px;line-height:11.6px;color:#444;">C</div>
<div class="b" style="left:445px;top:189px;width:1px;height:16px;background:#c8c8c8;"></div>
<div class="t" style="left:190.00px;width:400px;text-align:center;top:191.48px;font-size:11.6px;line-height:11.6px;color:#444;">D</div>
<div class="b" style="left:561px;top:189px;width:1px;height:16px;background:#c8c8c8;"></div>
<div class="t" style="left:303.50px;width:400px;text-align:center;top:191.48px;font-size:11.6px;line-height:11.6px;color:#444;">E</div>
<div class="b" style="left:673px;top:189px;width:1px;height:16px;background:#c8c8c8;"></div>
<div class="t" style="left:417.50px;width:400px;text-align:center;top:191.48px;font-size:11.6px;line-height:11.6px;color:#444;">F</div>
<div class="b" style="left:788px;top:189px;width:1px;height:16px;background:#c8c8c8;"></div>
<div class="t" style="left:531.00px;width:400px;text-align:center;top:191.48px;font-size:11.6px;line-height:11.6px;color:#444;">G</div>
<div class="b" style="left:881px;top:189px;width:1px;height:16px;background:#c8c8c8;"></div>
<div class="t" style="left:635.00px;width:400px;text-align:center;top:191.48px;font-size:11.6px;line-height:11.6px;color:#444;">H</div>
<div class="b" style="left:897px;top:189px;width:1px;height:16px;background:#c8c8c8;"></div>
<div class="t" style="left:689.50px;width:400px;text-align:center;top:191.48px;font-size:11.6px;line-height:11.6px;color:#444;">I</div>
<div class="b" style="left:962px;top:189px;width:1px;height:16px;background:#c8c8c8;"></div>
<div class="t" style="left:730.00px;width:400px;text-align:center;top:191.48px;font-size:11.6px;line-height:11.6px;color:#444;">J</div>
<div class="b" style="left:1028px;top:189px;width:1px;height:16px;background:#c8c8c8;"></div>
<div class="t" style="left:795.50px;width:400px;text-align:center;top:191.48px;font-size:11.6px;line-height:11.6px;color:#444;">K</div>
<div class="b" style="left:1093px;top:189px;width:1px;height:16px;background:#c8c8c8;"></div>
<div class="t" style="left:861.00px;width:400px;text-align:center;top:191.48px;font-size:11.6px;line-height:11.6px;color:#444;">L</div>
<div class="b" style="left:1159px;top:189px;width:1px;height:16px;background:#c8c8c8;"></div>
<div class="t" style="left:926.50px;width:400px;text-align:center;top:191.48px;font-size:11.6px;line-height:11.6px;color:#444;">M</div>
<div class="b" style="left:1225px;top:189px;width:1px;height:16px;background:#c8c8c8;"></div>
<div class="t" style="left:992.50px;width:400px;text-align:center;top:191.48px;font-size:11.6px;line-height:11.6px;color:#444;">N</div>
<div class="b" style="left:1290px;top:189px;width:1px;height:16px;background:#c8c8c8;"></div>
<div class="t" style="left:1058.00px;width:400px;text-align:center;top:191.48px;font-size:11.6px;line-height:11.6px;color:#444;">O</div>
<div class="b" style="left:1356px;top:189px;width:1px;height:16px;background:#c8c8c8;"></div>
<div class="t" style="left:1123.50px;width:400px;text-align:center;top:191.48px;font-size:11.6px;line-height:11.6px;color:#444;">P</div>
<div class="b" style="left:1422px;top:189px;width:1px;height:16px;background:#c8c8c8;"></div>
<div class="t" style="left:1189.50px;width:400px;text-align:center;top:191.48px;font-size:11.6px;line-height:11.6px;color:#444;">Q</div>
<div class="b" style="left:1487px;top:189px;width:1px;height:16px;background:#c8c8c8;"></div>
<div class="t" style="left:1255.00px;width:400px;text-align:center;top:191.48px;font-size:11.6px;line-height:11.6px;color:#444;">R</div>
<div class="b" style="left:1553px;top:189px;width:1px;height:16px;background:#c8c8c8;"></div>
<div class="t" style="left:1320.50px;width:400px;text-align:center;top:191.48px;font-size:11.6px;line-height:11.6px;color:#444;">S</div>
<div class="b" style="left:1619px;top:189px;width:1px;height:16px;background:#c8c8c8;"></div>
<div class="t" style="left:1386.50px;width:400px;text-align:center;top:191.48px;font-size:11.6px;line-height:11.6px;color:#444;">T</div>
<div class="b" style="left:1684px;top:189px;width:1px;height:16px;background:#c8c8c8;"></div>
<div class="t" style="left:1452.00px;width:400px;text-align:center;top:191.48px;font-size:11.6px;line-height:11.6px;color:#444;">U</div>
<div class="b" style="left:1750px;top:189px;width:1px;height:16px;background:#c8c8c8;"></div>
<div class="t" style="left:1517.50px;width:400px;text-align:center;top:191.48px;font-size:11.6px;line-height:11.6px;color:#444;">V</div>
<div class="b" style="left:1816px;top:189px;width:1px;height:16px;background:#c8c8c8;"></div>
<div class="t" style="left:1583.50px;width:400px;text-align:center;top:191.48px;font-size:11.6px;line-height:11.6px;color:#444;">W</div>
<div class="b" style="left:1881px;top:189px;width:1px;height:16px;background:#c8c8c8;"></div>
<div class="t" style="left:1649.00px;width:400px;text-align:center;top:191.48px;font-size:11.6px;line-height:11.6px;color:#444;">X</div>
<div class="b" style="left:25px;top:188px;width:1px;height:18px;background:#c8c8c8;"></div>
<div class="b" style="left:0px;top:206px;width:25px;height:908px;background:#e6e6e6;"></div>
<div class="b" style="left:25px;top:206px;width:1px;height:908px;background:#ababab;"></div>
<div class="b" style="left:0px;top:206px;width:25px;height:42px;background:#d2d2d2;"></div>
<div class="b" style="left:0px;top:248px;width:25px;height:1px;background:#c0c0c0;"></div>
<div class="t" style="left:-187.70px;width:400px;text-align:center;top:233.62px;font-size:12.5px;line-height:12.5px;color:#217346;">1</div>
<div class="b" style="left:0px;top:285px;width:25px;height:1px;background:#c0c0c0;"></div>
<div class="t" style="left:-187.70px;width:400px;text-align:center;top:271.02px;font-size:12.5px;line-height:12.5px;color:#444;">2</div>
<div class="b" style="left:0px;top:313px;width:25px;height:1px;background:#c0c0c0;"></div>
<div class="t" style="left:-187.70px;width:400px;text-align:center;top:299.42px;font-size:12.5px;line-height:12.5px;color:#444;">3</div>
<div class="b" style="left:0px;top:338px;width:25px;height:1px;background:#c0c0c0;"></div>
<div class="t" style="left:-187.70px;width:400px;text-align:center;top:324.32px;font-size:12.5px;line-height:12.5px;color:#444;">4</div>
<div class="b" style="left:0px;top:363px;width:25px;height:1px;background:#c0c0c0;"></div>
<div class="t" style="left:-187.70px;width:400px;text-align:center;top:349.13px;font-size:12.5px;line-height:12.5px;color:#444;">5</div>
<div class="b" style="left:0px;top:388px;width:25px;height:1px;background:#c0c0c0;"></div>
<div class="t" style="left:-187.70px;width:400px;text-align:center;top:373.94px;font-size:12.5px;line-height:12.5px;color:#444;">6</div>
<div class="b" style="left:0px;top:413px;width:25px;height:1px;background:#c0c0c0;"></div>
<div class="t" style="left:-187.70px;width:400px;text-align:center;top:398.75px;font-size:12.5px;line-height:12.5px;color:#444;">7</div>
<div class="b" style="left:0px;top:437px;width:25px;height:1px;background:#c0c0c0;"></div>
<div class="t" style="left:-187.70px;width:400px;text-align:center;top:423.56px;font-size:12.5px;line-height:12.5px;color:#444;">8</div>
<div class="b" style="left:0px;top:462px;width:25px;height:1px;background:#c0c0c0;"></div>
<div class="t" style="left:-187.70px;width:400px;text-align:center;top:448.37px;font-size:12.5px;line-height:12.5px;color:#444;">9</div>
<div class="b" style="left:0px;top:487px;width:25px;height:1px;background:#c0c0c0;"></div>
<div class="t" style="left:-187.70px;width:400px;text-align:center;top:473.18px;font-size:12.5px;line-height:12.5px;color:#444;">10</div>
<div class="b" style="left:0px;top:512px;width:25px;height:1px;background:#c0c0c0;"></div>
<div class="t" style="left:-187.70px;width:400px;text-align:center;top:497.99px;font-size:12.5px;line-height:12.5px;color:#444;">11</div>
<div class="b" style="left:0px;top:537px;width:25px;height:1px;background:#c0c0c0;"></div>
<div class="t" style="left:-187.70px;width:400px;text-align:center;top:522.80px;font-size:12.5px;line-height:12.5px;color:#444;">12</div>
<div class="b" style="left:0px;top:561px;width:25px;height:1px;background:#c0c0c0;"></div>
<div class="t" style="left:-187.70px;width:400px;text-align:center;top:547.61px;font-size:12.5px;line-height:12.5px;color:#444;">13</div>
<div class="b" style="left:0px;top:586px;width:25px;height:1px;background:#c0c0c0;"></div>
<div class="t" style="left:-187.70px;width:400px;text-align:center;top:572.42px;font-size:12.5px;line-height:12.5px;color:#444;">14</div>
<div class="b" style="left:0px;top:611px;width:25px;height:1px;background:#c0c0c0;"></div>
<div class="t" style="left:-187.70px;width:400px;text-align:center;top:597.23px;font-size:12.5px;line-height:12.5px;color:#444;">15</div>
<div class="b" style="left:0px;top:636px;width:25px;height:1px;background:#c0c0c0;"></div>
<div class="t" style="left:-187.70px;width:400px;text-align:center;top:622.04px;font-size:12.5px;line-height:12.5px;color:#444;">16</div>
<div class="b" style="left:0px;top:661px;width:25px;height:1px;background:#c0c0c0;"></div>
<div class="t" style="left:-187.70px;width:400px;text-align:center;top:646.85px;font-size:12.5px;line-height:12.5px;color:#444;">17</div>
<div class="b" style="left:0px;top:686px;width:25px;height:1px;background:#c0c0c0;"></div>
<div class="t" style="left:-187.70px;width:400px;text-align:center;top:671.66px;font-size:12.5px;line-height:12.5px;color:#444;">18</div>
<div class="b" style="left:0px;top:710px;width:25px;height:1px;background:#c0c0c0;"></div>
<div class="t" style="left:-187.70px;width:400px;text-align:center;top:696.47px;font-size:12.5px;line-height:12.5px;color:#444;">19</div>
<div class="b" style="left:0px;top:735px;width:25px;height:1px;background:#c0c0c0;"></div>
<div class="t" style="left:-187.70px;width:400px;text-align:center;top:721.28px;font-size:12.5px;line-height:12.5px;color:#444;">20</div>
<div class="b" style="left:0px;top:760px;width:25px;height:1px;background:#c0c0c0;"></div>
<div class="t" style="left:-187.70px;width:400px;text-align:center;top:746.09px;font-size:12.5px;line-height:12.5px;color:#444;">21</div>
<div class="b" style="left:0px;top:785px;width:25px;height:1px;background:#c0c0c0;"></div>
<div class="t" style="left:-187.70px;width:400px;text-align:center;top:770.90px;font-size:12.5px;line-height:12.5px;color:#444;">22</div>
<div class="b" style="left:0px;top:810px;width:25px;height:1px;background:#c0c0c0;"></div>
<div class="t" style="left:-187.70px;width:400px;text-align:center;top:795.71px;font-size:12.5px;line-height:12.5px;color:#444;">23</div>
<div class="b" style="left:0px;top:834px;width:25px;height:1px;background:#c0c0c0;"></div>
<div class="t" style="left:-187.70px;width:400px;text-align:center;top:820.52px;font-size:12.5px;line-height:12.5px;color:#444;">24</div>
<div class="b" style="left:0px;top:859px;width:25px;height:1px;background:#c0c0c0;"></div>
<div class="t" style="left:-187.70px;width:400px;text-align:center;top:845.33px;font-size:12.5px;line-height:12.5px;color:#444;">25</div>
<div class="b" style="left:0px;top:884px;width:25px;height:1px;background:#c0c0c0;"></div>
<div class="t" style="left:-187.70px;width:400px;text-align:center;top:870.14px;font-size:12.5px;line-height:12.5px;color:#444;">26</div>
<div class="b" style="left:0px;top:909px;width:25px;height:1px;background:#c0c0c0;"></div>
<div class="t" style="left:-187.70px;width:400px;text-align:center;top:894.95px;font-size:12.5px;line-height:12.5px;color:#444;">27</div>
<div class="b" style="left:0px;top:934px;width:25px;height:1px;background:#c0c0c0;"></div>
<div class="t" style="left:-187.70px;width:400px;text-align:center;top:919.76px;font-size:12.5px;line-height:12.5px;color:#444;">28</div>
<div class="b" style="left:0px;top:958px;width:25px;height:1px;background:#c0c0c0;"></div>
<div class="t" style="left:-187.70px;width:400px;text-align:center;top:944.57px;font-size:12.5px;line-height:12.5px;color:#444;">29</div>
<div class="b" style="left:0px;top:983px;width:25px;height:1px;background:#c0c0c0;"></div>
<div class="t" style="left:-187.70px;width:400px;text-align:center;top:969.38px;font-size:12.5px;line-height:12.5px;color:#444;">30</div>
<div class="b" style="left:0px;top:1008px;width:25px;height:1px;background:#c0c0c0;"></div>
<div class="t" style="left:-187.70px;width:400px;text-align:center;top:994.19px;font-size:12.5px;line-height:12.5px;color:#444;">31</div>
<div class="b" style="left:0px;top:1033px;width:25px;height:1px;background:#c0c0c0;"></div>
<div class="t" style="left:-187.70px;width:400px;text-align:center;top:1019.00px;font-size:12.5px;line-height:12.5px;color:#444;">32</div>
<div class="b" style="left:0px;top:1058px;width:25px;height:1px;background:#c0c0c0;"></div>
<div class="t" style="left:-187.70px;width:400px;text-align:center;top:1043.81px;font-size:12.5px;line-height:12.5px;color:#444;">33</div>
<div class="b" style="left:0px;top:1083px;width:25px;height:1px;background:#c0c0c0;"></div>
<div class="t" style="left:-187.70px;width:400px;text-align:center;top:1068.62px;font-size:12.5px;line-height:12.5px;color:#444;">34</div>
<div class="b" style="left:0px;top:1107px;width:25px;height:1px;background:#c0c0c0;"></div>
<div class="t" style="left:-187.70px;width:400px;text-align:center;top:1093.43px;font-size:12.5px;line-height:12.5px;color:#444;">35</div>
<div class="b" style="left:42px;top:216px;width:568px;height:17px;background:#23778f;"></div>
<div class="b" style="left:614px;top:216px;width:268px;height:17px;background:#7bcae0;"></div>
<div class="t " style="left:44.30px;top:258.01px;font-size:19.6px;line-height:19.6px;color:#1e7b98;">Invoice Details</div>
<div class="b" style="left:41px;top:285px;width:841px;height:1px;background:#a9dbe9;"></div>
<div class="t " style="left:44.20px;top:293.93px;font-size:12.6px;line-height:12.6px;color:#25647b;">Description</div>
<div class="b" style="left:203px;top:296px;width:17px;height:17px;background:linear-gradient(#ffffff,#ececec);border:1px solid #b3b3b3;"></div>
<svg class="s" style="left:208.5px;top:303.8px;" width="6" height="4" viewBox="0 0 6 4"><path d="M0 0H6L3 3Z" fill="#606060"/></svg>
<div class="t " style="left:223.50px;top:293.93px;font-size:12.6px;line-height:12.6px;color:#25647b;">Invoice #</div>
<div class="b" style="left:317px;top:296px;width:17px;height:17px;background:linear-gradient(#ffffff,#ececec);border:1px solid #b3b3b3;"></div>
<svg class="s" style="left:320px;top:301px;" width="11" height="9" viewBox="0 0 11 9"><path d="M0 3H6L3 6.5Z" fill="#555"/><path d="M8.5 0.5V7M7 2L8.5 0.3L10 2" fill="none" stroke="#555" stroke-width="1"/></svg>
<div class="t " style="left:337.60px;top:293.93px;font-size:12.6px;line-height:12.6px;color:#25647b;">Item #</div>
<div class="b" style="left:429px;top:296px;width:17px;height:17px;background:linear-gradient(#ffffff,#ececec);border:1px solid #b3b3b3;"></div>
<svg class="s" style="left:434.5px;top:303.8px;" width="6" height="4" viewBox="0 0 6 4"><path d="M0 0H6L3 3Z" fill="#606060"/></svg>
<div class="t " style="left:448.70px;top:293.93px;font-size:12.6px;line-height:12.6px;color:#25647b;">Qty</div>
<div class="b" style="left:545px;top:296px;width:17px;height:17px;background:linear-gradient(#ffffff,#ececec);border:1px solid #b3b3b3;"></div>
<svg class="s" style="left:550.5px;top:303.8px;" width="6" height="4" viewBox="0 0 6 4"><path d="M0 0H6L3 3Z" fill="#606060"/></svg>
<div class="t " style="left:565.00px;top:293.93px;font-size:12.6px;line-height:12.6px;color:#25647b;">Unit Price</div>
<div class="b" style="left:657px;top:296px;width:17px;height:17px;background:linear-gradient(#ffffff,#ececec);border:1px solid #b3b3b3;"></div>
<svg class="s" style="left:662.5px;top:303.8px;" width="6" height="4" viewBox="0 0 6 4"><path d="M0 0H6L3 3Z" fill="#606060"/></svg>
<div class="t " style="left:677.00px;top:293.93px;font-size:12.6px;line-height:12.6px;color:#25647b;">Discount</div>
<div class="b" style="left:771px;top:296px;width:17px;height:17px;background:linear-gradient(#ffffff,#ececec);border:1px solid #b3b3b3;"></div>
<svg class="s" style="left:776.5px;top:303.8px;" width="6" height="4" viewBox="0 0 6 4"><path d="M0 0H6L3 3Z" fill="#606060"/></svg>
<div class="t " style="left:791.30px;top:293.93px;font-size:12.6px;line-height:12.6px;color:#25647b;">Total</div>
<div class="b" style="left:865px;top:296px;width:17px;height:17px;background:linear-gradient(#ffffff,#ececec);border:1px solid #b3b3b3;"></div>
<svg class="s" style="left:870.5px;top:303.8px;" width="6" height="4" viewBox="0 0 6 4"><path d="M0 0H6L3 3Z" fill="#606060"/></svg>
<div style="position:absolute;left:0;top:206px;width:1898px;height:908px;overflow:hidden;">
<div class="b" style="left:41px;top:107.00px;width:841px;height:1px;background:#b0deea;"></div>
<div class="b" style="left:41px;top:108.00px;width:841px;height:24px;background:#d3ecf3;"></div>
<div class="b" style="left:41px;top:132.00px;width:841px;height:1px;background:#b0deea;"></div>
<div class="t" style="left:52.90px;top:118.30px;font-size:12.4px;line-height:12.4px;color:#3a8db0;">Invoice 3-456-1 Data 1</div>
<div class="t" style="left:232.40px;top:118.30px;font-size:12.4px;line-height:12.4px;color:#3a8db0;letter-spacing:0.25px;">3-456-1</div>
<div class="t" style="left:347.60px;top:118.30px;font-size:12.4px;line-height:12.4px;color:#3a8db0;">1</div>
<div class="t" style="right:1342.60px;top:112.10px;font-size:12.4px;line-height:12.4px;color:#3a8db0;letter-spacing:0.3px;">1</div>
<div class="t" style="right:1226.40px;top:112.10px;font-size:12.4px;line-height:12.4px;color:#3a8db0;letter-spacing:0.3px;">$1.00</div>
<div class="t" style="right:1112.00px;top:112.10px;font-size:12.4px;line-height:12.4px;color:#3a8db0;letter-spacing:0.3px;">$1.00</div>
<div class="t" style="right:1018.40px;top:112.10px;font-size:12.4px;line-height:12.4px;color:#3a8db0;letter-spacing:0.3px;">$0.00</div>
<div class="b" style="left:41px;top:157.00px;width:841px;height:1px;background:#b0deea;"></div>
<div class="t" style="left:52.90px;top:143.11px;font-size:12.4px;line-height:12.4px;color:#3a8db0;">Invoice 3-456-1 Data 2</div>
<div class="t" style="left:232.40px;top:143.11px;font-size:12.4px;line-height:12.4px;color:#3a8db0;letter-spacing:0.25px;">3-456-1</div>
<div class="t" style="left:347.60px;top:143.11px;font-size:12.4px;line-height:12.4px;color:#3a8db0;">2</div>
<div class="t" style="right:1342.60px;top:136.91px;font-size:12.4px;line-height:12.4px;color:#3a8db0;letter-spacing:0.3px;">2</div>
<div class="t" style="right:1226.40px;top:136.91px;font-size:12.4px;line-height:12.4px;color:#3a8db0;letter-spacing:0.3px;">$2.00</div>
<div class="t" style="right:1112.00px;top:136.91px;font-size:12.4px;line-height:12.4px;color:#3a8db0;letter-spacing:0.3px;">$2.00</div>
<div class="t" style="right:1018.40px;top:136.91px;font-size:12.4px;line-height:12.4px;color:#3a8db0;letter-spacing:0.3px;">$2.00</div>
<div class="b" style="left:41px;top:158.00px;width:841px;height:24px;background:#d3ecf3;"></div>
<div class="b" style="left:41px;top:182.00px;width:841px;height:1px;background:#b0deea;"></div>
<div class="t" style="left:52.90px;top:167.92px;font-size:12.4px;line-height:12.4px;color:#3a8db0;">Invoice 3-456-1 Data 3</div>
<div class="t" style="left:232.40px;top:167.92px;font-size:12.4px;line-height:12.4px;color:#3a8db0;letter-spacing:0.25px;">3-456-1</div>
<div class="t" style="left:347.60px;top:167.92px;font-size:12.4px;line-height:12.4px;color:#3a8db0;">3</div>
<div class="t" style="right:1342.60px;top:161.72px;font-size:12.4px;line-height:12.4px;color:#3a8db0;letter-spacing:0.3px;">3</div>
<div class="t" style="right:1226.40px;top:161.72px;font-size:12.4px;line-height:12.4px;color:#3a8db0;letter-spacing:0.3px;">$3.00</div>
<div class="t" style="right:1112.00px;top:161.72px;font-size:12.4px;line-height:12.4px;color:#3a8db0;letter-spacing:0.3px;">$3.00</div>
<div class="t" style="right:1018.40px;top:161.72px;font-size:12.4px;line-height:12.4px;color:#3a8db0;letter-spacing:0.3px;">$6.00</div>
<div class="b" style="left:41px;top:207.00px;width:841px;height:1px;background:#b0deea;"></div>
<div class="t" style="left:52.90px;top:192.73px;font-size:12.4px;line-height:12.4px;color:#3a8db0;">Invoice 3-456-1 Data 4</div>
<div class="t" style="left:232.40px;top:192.73px;font-size:12.4px;line-height:12.4px;color:#3a8db0;letter-spacing:0.25px;">3-456-1</div>
<div class="t" style="left:347.60px;top:192.73px;font-size:12.4px;line-height:12.4px;color:#3a8db0;">4</div>
<div class="t" style="right:1342.60px;top:186.53px;font-size:12.4px;line-height:12.4px;color:#3a8db0;letter-spacing:0.3px;">4</div>
<div class="t" style="right:1226.40px;top:186.53px;font-size:12.4px;line-height:12.4px;color:#3a8db0;letter-spacing:0.3px;">$4.00</div>
<div class="t" style="right:1112.00px;top:186.53px;font-size:12.4px;line-height:12.4px;color:#3a8db0;letter-spacing:0.3px;">$4.00</div>
<div class="t" style="right:1018.40px;top:186.53px;font-size:12.4px;line-height:12.4px;color:#3a8db0;letter-spacing:0.3px;">$12.00</div>
<div class="b" style="left:41px;top:208.00px;width:841px;height:23px;background:#d3ecf3;"></div>
<div class="b" style="left:41px;top:231.00px;width:841px;height:1px;background:#b0deea;"></div>
<div class="t" style="left:52.90px;top:217.54px;font-size:12.4px;line-height:12.4px;color:#3a8db0;">Invoice 3-456-1 Data 5</div>
<div class="t" style="left:232.40px;top:217.54px;font-size:12.4px;line-height:12.4px;color:#3a8db0;letter-spacing:0.25px;">3-456-1</div>
<div class="t" style="left:347.60px;top:217.54px;font-size:12.4px;line-height:12.4px;color:#3a8db0;">5</div>
<div class="t" style="right:1342.60px;top:211.34px;font-size:12.4px;line-height:12.4px;color:#3a8db0;letter-spacing:0.3px;">5</div>
<div class="t" style="right:1226.40px;top:211.34px;font-size:12.4px;line-height:12.4px;color:#3a8db0;letter-spacing:0.3px;">$5.00</div>
<div class="t" style="right:1112.00px;top:211.34px;font-size:12.4px;line-height:12.4px;color:#3a8db0;letter-spacing:0.3px;">$5.00</div>
<div class="t" style="right:1018.40px;top:211.34px;font-size:12.4px;line-height:12.4px;color:#3a8db0;letter-spacing:0.3px;">$20.00</div>
<div class="b" style="left:41px;top:256.00px;width:841px;height:1px;background:#b0deea;"></div>
<div class="t" style="left:52.90px;top:242.35px;font-size:12.4px;line-height:12.4px;color:#3a8db0;">Invoice 3-456-1 Data 6</div>
<div class="t" style="left:232.40px;top:242.35px;font-size:12.4px;line-height:12.4px;color:#3a8db0;letter-spacing:0.25px;">3-456-1</div>
<div class="t" style="left:347.60px;top:242.35px;font-size:12.4px;line-height:12.4px;color:#3a8db0;">6</div>
<div class="t" style="right:1342.60px;top:236.15px;font-size:12.4px;line-height:12.4px;color:#3a8db0;letter-spacing:0.3px;">6</div>
<div class="t" style="right:1226.40px;top:236.15px;font-size:12.4px;line-height:12.4px;color:#3a8db0;letter-spacing:0.3px;">$6.00</div>
<div class="t" style="right:1112.00px;top:236.15px;font-size:12.4px;line-height:12.4px;color:#3a8db0;letter-spacing:0.3px;">$6.00</div>
<div class="t" style="right:1018.40px;top:236.15px;font-size:12.4px;line-height:12.4px;color:#3a8db0;letter-spacing:0.3px;">$30.00</div>
<div class="b" style="left:41px;top:257.00px;width:841px;height:24px;background:#d3ecf3;"></div>
<div class="b" style="left:41px;top:281.00px;width:841px;height:1px;background:#b0deea;"></div>
<div class="t" style="left:52.90px;top:267.16px;font-size:12.4px;line-height:12.4px;color:#3a8db0;">Invoice 3-456-1 Data 7</div>
<div class="t" style="left:232.40px;top:267.16px;font-size:12.4px;line-height:12.4px;color:#3a8db0;letter-spacing:0.25px;">3-456-1</div>
<div class="t" style="left:347.60px;top:267.16px;font-size:12.4px;line-height:12.4px;color:#3a8db0;">7</div>
<div class="t" style="right:1342.60px;top:260.96px;font-size:12.4px;line-height:12.4px;color:#3a8db0;letter-spacing:0.3px;">7</div>
<div class="t" style="right:1226.40px;top:260.96px;font-size:12.4px;line-height:12.4px;color:#3a8db0;letter-spacing:0.3px;">$7.00</div>
<div class="t" style="right:1112.00px;top:260.96px;font-size:12.4px;line-height:12.4px;color:#3a8db0;letter-spacing:0.3px;">$7.00</div>
<div class="t" style="right:1018.40px;top:260.96px;font-size:12.4px;line-height:12.4px;color:#3a8db0;letter-spacing:0.3px;">$42.00</div>
<div class="b" style="left:41px;top:306.00px;width:841px;height:1px;background:#b0deea;"></div>
<div class="t" style="left:52.90px;top:291.97px;font-size:12.4px;line-height:12.4px;color:#3a8db0;">Invoice 3-456-1 Data 8</div>
<div class="t" style="left:232.40px;top:291.97px;font-size:12.4px;line-height:12.4px;color:#3a8db0;letter-spacing:0.25px;">3-456-1</div>
<div class="t" style="left:347.60px;top:291.97px;font-size:12.4px;line-height:12.4px;color:#3a8db0;">8</div>
<div class="t" style="right:1342.60px;top:285.77px;font-size:12.4px;line-height:12.4px;color:#3a8db0;letter-spacing:0.3px;">8</div>
<div class="t" style="right:1226.40px;top:285.77px;font-size:12.4px;line-height:12.4px;color:#3a8db0;letter-spacing:0.3px;">$8.00</div>
<div class="t" style="right:1112.00px;top:285.77px;font-size:12.4px;line-height:12.4px;color:#3a8db0;letter-spacing:0.3px;">$8.00</div>
<div class="t" style="right:1018.40px;top:285.77px;font-size:12.4px;line-height:12.4px;color:#3a8db0;letter-spacing:0.3px;">$56.00</div>
<div class="b" style="left:41px;top:307.00px;width:841px;height:24px;background:#d3ecf3;"></div>
<div class="b" style="left:41px;top:331.00px;width:841px;height:1px;background:#b0deea;"></div>
<div class="t" style="left:52.90px;top:316.78px;font-size:12.4px;line-height:12.4px;color:#3a8db0;">Invoice 3-456-1 Data 9</div>
<div class="t" style="left:232.40px;top:316.78px;font-size:12.4px;line-height:12.4px;color:#3a8db0;letter-spacing:0.25px;">3-456-1</div>
<div class="t" style="left:347.60px;top:316.78px;font-size:12.4px;line-height:12.4px;color:#3a8db0;">9</div>
<div class="t" style="right:1342.60px;top:310.58px;font-size:12.4px;line-height:12.4px;color:#3a8db0;letter-spacing:0.3px;">9</div>
<div class="t" style="right:1226.40px;top:310.58px;font-size:12.4px;line-height:12.4px;color:#3a8db0;letter-spacing:0.3px;">$9.00</div>
<div class="t" style="right:1112.00px;top:310.58px;font-size:12.4px;line-height:12.4px;color:#3a8db0;letter-spacing:0.3px;">$9.00</div>
<div class="t" style="right:1018.40px;top:310.58px;font-size:12.4px;line-height:12.4px;color:#3a8db0;letter-spacing:0.3px;">$72.00</div>
<div class="b" style="left:41px;top:355.00px;width:841px;height:1px;background:#b0deea;"></div>
<div class="t" style="left:52.90px;top:341.59px;font-size:12.4px;line-height:12.4px;color:#3a8db0;">Invoice 3-456-1 Data 10</div>
<div class="t" style="left:232.40px;top:341.59px;font-size:12.4px;line-height:12.4px;color:#3a8db0;letter-spacing:0.25px;">3-456-1</div>
<div class="t" style="left:347.60px;top:341.59px;font-size:12.4px;line-height:12.4px;color:#3a8db0;">10</div>
<div class="t" style="right:1342.60px;top:335.39px;font-size:12.4px;line-height:12.4px;color:#3a8db0;letter-spacing:0.3px;">10</div>
<div class="t" style="right:1226.40px;top:335.39px;font-size:12.4px;line-height:12.4px;color:#3a8db0;letter-spacing:0.3px;">$10.00</div>
<div class="t" style="right:1112.00px;top:335.39px;font-size:12.4px;line-height:12.4px;color:#3a8db0;letter-spacing:0.3px;">$10.00</div>
<div class="t" style="right:1018.40px;top:335.39px;font-size:12.4px;line-height:12.4px;color:#3a8db0;letter-spacing:0.3px;">$90.00</div>
<div class="b" style="left:41px;top:356.00px;width:841px;height:24px;background:#d3ecf3;"></div>
<div class="b" style="left:41px;top:380.00px;width:841px;height:1px;background:#b0deea;"></div>
<div class="t" style="left:52.90px;top:366.40px;font-size:12.4px;line-height:12.4px;color:#3a8db0;">Invoice 3-456-1 Data 11</div>
<div class="t" style="left:232.40px;top:366.40px;font-size:12.4px;line-height:12.4px;color:#3a8db0;letter-spacing:0.25px;">3-456-1</div>
<div class="t" style="left:347.60px;top:366.40px;font-size:12.4px;line-height:12.4px;color:#3a8db0;">11</div>
<div class="t" style="right:1342.60px;top:360.20px;font-size:12.4px;line-height:12.4px;color:#3a8db0;letter-spacing:0.3px;">11</div>
<div class="t" style="right:1226.40px;top:360.20px;font-size:12.4px;line-height:12.4px;color:#3a8db0;letter-spacing:0.3px;">$11.00</div>
<div class="t" style="right:1112.00px;top:360.20px;font-size:12.4px;line-height:12.4px;color:#3a8db0;letter-spacing:0.3px;">$11.00</div>
<div class="t" style="right:1018.40px;top:360.20px;font-size:12.4px;line-height:12.4px;color:#3a8db0;letter-spacing:0.3px;">$110.00</div>
<div class="b" style="left:41px;top:405.00px;width:841px;height:1px;background:#b0deea;"></div>
<div class="t" style="left:52.90px;top:391.21px;font-size:12.4px;line-height:12.4px;color:#3a8db0;">Invoice 3-456-1 Data 12</div>
<div class="t" style="left:232.40px;top:391.21px;font-size:12.4px;line-height:12.4px;color:#3a8db0;letter-spacing:0.25px;">3-456-1</div>
<div class="t" style="left:347.60px;top:391.21px;font-size:12.4px;line-height:12.4px;color:#3a8db0;">12</div>
<div class="t" style="right:1342.60px;top:385.01px;font-size:12.4px;line-height:12.4px;color:#3a8db0;letter-spacing:0.3px;">12</div>
<div class="t" style="right:1226.40px;top:385.01px;font-size:12.4px;line-height:12.4px;color:#3a8db0;letter-spacing:0.3px;">$12.00</div>
<div class="t" style="right:1112.00px;top:385.01px;font-size:12.4px;line-height:12.4px;color:#3a8db0;letter-spacing:0.3px;">$12.00</div>
<div class="t" style="right:1018.40px;top:385.01px;font-size:12.4px;line-height:12.4px;color:#3a8db0;letter-spacing:0.3px;">$132.00</div>
<div class="b" style="left:41px;top:406.00px;width:841px;height:24px;background:#d3ecf3;"></div>
<div class="b" style="left:41px;top:430.00px;width:841px;height:1px;background:#b0deea;"></div>
<div class="t" style="left:52.90px;top:416.02px;font-size:12.4px;line-height:12.4px;color:#3a8db0;">Invoice 3-456-1 Data 13</div>
<div class="t" style="left:232.40px;top:416.02px;font-size:12.4px;line-height:12.4px;color:#3a8db0;letter-spacing:0.25px;">3-456-1</div>
<div class="t" style="left:347.60px;top:416.02px;font-size:12.4px;line-height:12.4px;color:#3a8db0;">13</div>
<div class="t" style="right:1342.60px;top:409.82px;font-size:12.4px;line-height:12.4px;color:#3a8db0;letter-spacing:0.3px;">13</div>
<div class="t" style="right:1226.40px;top:409.82px;font-size:12.4px;line-height:12.4px;color:#3a8db0;letter-spacing:0.3px;">$13.00</div>
<div class="t" style="right:1112.00px;top:409.82px;font-size:12.4px;line-height:12.4px;color:#3a8db0;letter-spacing:0.3px;">$13.00</div>
<div class="t" style="right:1018.40px;top:409.82px;font-size:12.4px;line-height:12.4px;color:#3a8db0;letter-spacing:0.3px;">$156.00</div>
<div class="b" style="left:41px;top:455.00px;width:841px;height:1px;background:#b0deea;"></div>
<div class="t" style="left:52.90px;top:440.83px;font-size:12.4px;line-height:12.4px;color:#3a8db0;">Invoice 3-456-1 Data 14</div>
<div class="t" style="left:232.40px;top:440.83px;font-size:12.4px;line-height:12.4px;color:#3a8db0;letter-spacing:0.25px;">3-456-1</div>
<div class="t" style="left:347.60px;top:440.83px;font-size:12.4px;line-height:12.4px;color:#3a8db0;">14</div>
<div class="t" style="right:1342.60px;top:434.63px;font-size:12.4px;line-height:12.4px;color:#3a8db0;letter-spacing:0.3px;">14</div>
<div class="t" style="right:1226.40px;top:434.63px;font-size:12.4px;line-height:12.4px;color:#3a8db0;letter-spacing:0.3px;">$14.00</div>
<div class="t" style="right:1112.00px;top:434.63px;font-size:12.4px;line-height:12.4px;color:#3a8db0;letter-spacing:0.3px;">$14.00</div>
<div class="t" style="right:1018.40px;top:434.63px;font-size:12.4px;line-height:12.4px;color:#3a8db0;letter-spacing:0.3px;">$182.00</div>
<div class="b" style="left:41px;top:456.00px;width:841px;height:24px;background:#d3ecf3;"></div>
<div class="b" style="left:41px;top:480.00px;width:841px;height:1px;background:#b0deea;"></div>
<div class="t" style="left:52.90px;top:465.64px;font-size:12.4px;line-height:12.4px;color:#3a8db0;">Invoice 3-456-1 Data 15</div>
<div class="t" style="left:232.40px;top:465.64px;font-size:12.4px;line-height:12.4px;color:#3a8db0;letter-spacing:0.25px;">3-456-1</div>
<div class="t" style="left:347.60px;top:465.64px;font-size:12.4px;line-height:12.4px;color:#3a8db0;">15</div>
<div class="t" style="right:1342.60px;top:459.44px;font-size:12.4px;line-height:12.4px;color:#3a8db0;letter-spacing:0.3px;">15</div>
<div class="t" style="right:1226.40px;top:459.44px;font-size:12.4px;line-height:12.4px;color:#3a8db0;letter-spacing:0.3px;">$15.00</div>
<div class="t" style="right:1112.00px;top:459.44px;font-size:12.4px;line-height:12.4px;color:#3a8db0;letter-spacing:0.3px;">$15.00</div>
<div class="t" style="right:1018.40px;top:459.44px;font-size:12.4px;line-height:12.4px;color:#3a8db0;letter-spacing:0.3px;">$210.00</div>
<div class="b" style="left:41px;top:504.00px;width:841px;height:1px;background:#b0deea;"></div>
<div class="t" style="left:52.90px;top:490.45px;font-size:12.4px;line-height:12.4px;color:#3a8db0;">Invoice 3-456-1 Data 16</div>
<div class="t" style="left:232.40px;top:490.45px;font-size:12.4px;line-height:12.4px;color:#3a8db0;letter-spacing:0.25px;">3-456-1</div>
<div class="t" style="left:347.60px;top:490.45px;font-size:12.4px;line-height:12.4px;color:#3a8db0;">16</div>
<div class="t" style="right:1342.60px;top:484.25px;font-size:12.4px;line-height:12.4px;color:#3a8db0;letter-spacing:0.3px;">16</div>
<div class="t" style="right:1226.40px;top:484.25px;font-size:12.4px;line-height:12.4px;color:#3a8db0;letter-spacing:0.3px;">$16.00</div>
<div class="t" style="right:1112.00px;top:484.25px;font-size:12.4px;line-height:12.4px;color:#3a8db0;letter-spacing:0.3px;">$16.00</div>
<div class="t" style="right:1018.40px;top:484.25px;font-size:12.4px;line-height:12.4px;color:#3a8db0;letter-spacing:0.3px;">$240.00</div>
<div class="b" style="left:41px;top:505.00px;width:841px;height:24px;background:#d3ecf3;"></div>
<div class="b" style="left:41px;top:529.00px;width:841px;height:1px;background:#b0deea;"></div>
<div class="t" style="left:52.90px;top:515.26px;font-size:12.4px;line-height:12.4px;color:#3a8db0;">Invoice 3-456-1 Data 17</div>
<div class="t" style="left:232.40px;top:515.26px;font-size:12.4px;line-height:12.4px;color:#3a8db0;letter-spacing:0.25px;">3-456-1</div>
<div class="t" style="left:347.60px;top:515.26px;font-size:12.4px;line-height:12.4px;color:#3a8db0;">17</div>
<div class="t" style="right:1342.60px;top:509.06px;font-size:12.4px;line-height:12.4px;color:#3a8db0;letter-spacing:0.3px;">17</div>
<div class="t" style="right:1226.40px;top:509.06px;font-size:12.4px;line-height:12.4px;color:#3a8db0;letter-spacing:0.3px;">$17.00</div>
<div class="t" style="right:1112.00px;top:509.06px;font-size:12.4px;line-height:12.4px;color:#3a8db0;letter-spacing:0.3px;">$17.00</div>
<div class="t" style="right:1018.40px;top:509.06px;font-size:12.4px;line-height:12.4px;color:#3a8db0;letter-spacing:0.3px;">$272.00</div>
<div class="b" style="left:41px;top:554.00px;width:841px;height:1px;background:#b0deea;"></div>
<div class="t" style="left:52.90px;top:540.07px;font-size:12.4px;line-height:12.4px;color:#3a8db0;">Invoice 3-456-1 Data 18</div>
<div class="t" style="left:232.40px;top:540.07px;font-size:12.4px;line-height:12.4px;color:#3a8db0;letter-spacing:0.25px;">3-456-1</div>
<div class="t" style="left:347.60px;top:540.07px;font-size:12.4px;line-height:12.4px;color:#3a8db0;">18</div>
<div class="t" style="right:1342.60px;top:533.87px;font-size:12.4px;line-height:12.4px;color:#3a8db0;letter-spacing:0.3px;">18</div>
<div class="t" style="right:1226.40px;top:533.87px;font-size:12.4px;line-height:12.4px;color:#3a8db0;letter-spacing:0.3px;">$18.00</div>
<div class="t" style="right:1112.00px;top:533.87px;font-size:12.4px;line-height:12.4px;color:#3a8db0;letter-spacing:0.3px;">$18.00</div>
<div class="t" style="right:1018.40px;top:533.87px;font-size:12.4px;line-height:12.4px;color:#3a8db0;letter-spacing:0.3px;">$306.00</div>
<div class="b" style="left:41px;top:555.00px;width:841px;height:24px;background:#d3ecf3;"></div>
<div class="b" style="left:41px;top:579.00px;width:841px;height:1px;background:#b0deea;"></div>
<div class="t" style="left:52.90px;top:564.88px;font-size:12.4px;line-height:12.4px;color:#3a8db0;">Invoice 3-456-1 Data 19</div>
<div class="t" style="left:232.40px;top:564.88px;font-size:12.4px;line-height:12.4px;color:#3a8db0;letter-spacing:0.25px;">3-456-1</div>
<div class="t" style="left:347.60px;top:564.88px;font-size:12.4px;line-height:12.4px;color:#3a8db0;">19</div>
<div class="t" style="right:1342.60px;top:558.68px;font-size:12.4px;line-height:12.4px;color:#3a8db0;letter-spacing:0.3px;">19</div>
<div class="t" style="right:1226.40px;top:558.68px;font-size:12.4px;line-height:12.4px;color:#3a8db0;letter-spacing:0.3px;">$19.00</div>
<div class="t" style="right:1112.00px;top:558.68px;font-size:12.4px;line-height:12.4px;color:#3a8db0;letter-spacing:0.3px;">$19.00</div>
<div class="t" style="right:1018.40px;top:558.68px;font-size:12.4px;line-height:12.4px;color:#3a8db0;letter-spacing:0.3px;">$342.00</div>
<div class="b" style="left:41px;top:604.00px;width:841px;height:1px;background:#b0deea;"></div>
<div class="t" style="left:52.90px;top:589.69px;font-size:12.4px;line-height:12.4px;color:#3a8db0;">Invoice 3-456-1 Data 20</div>
<div class="t" style="left:232.40px;top:589.69px;font-size:12.4px;line-height:12.4px;color:#3a8db0;letter-spacing:0.25px;">3-456-1</div>
<div class="t" style="left:347.60px;top:589.69px;font-size:12.4px;line-height:12.4px;color:#3a8db0;">20</div>
<div class="t" style="right:1342.60px;top:583.49px;font-size:12.4px;line-height:12.4px;color:#3a8db0;letter-spacing:0.3px;">20</div>
<div class="t" style="right:1226.40px;top:583.49px;font-size:12.4px;line-height:12.4px;color:#3a8db0;letter-spacing:0.3px;">$20.00</div>
<div class="t" style="right:1112.00px;top:583.49px;font-size:12.4px;line-height:12.4px;color:#3a8db0;letter-spacing:0.3px;">$20.00</div>
<div class="t" style="right:1018.40px;top:583.49px;font-size:12.4px;line-height:12.4px;color:#3a8db0;letter-spacing:0.3px;">$380.00</div>
<div class="b" style="left:41px;top:605.00px;width:841px;height:23px;background:#d3ecf3;"></div>
<div class="b" style="left:41px;top:628.00px;width:841px;height:1px;background:#b0deea;"></div>
<div class="t" style="left:52.90px;top:614.50px;font-size:12.4px;line-height:12.4px;color:#3a8db0;">Invoice 3-456-1 Data 21</div>
<div class="t" style="left:232.40px;top:614.50px;font-size:12.4px;line-height:12.4px;color:#3a8db0;letter-spacing:0.25px;">3-456-1</div>
<div class="t" style="left:347.60px;top:614.50px;font-size:12.4px;line-height:12.4px;color:#3a8db0;">21</div>
<div class="t" style="right:1342.60px;top:608.30px;font-size:12.4px;line-height:12.4px;color:#3a8db0;letter-spacing:0.3px;">21</div>
<div class="t" style="right:1226.40px;top:608.30px;font-size:12.4px;line-height:12.4px;color:#3a8db0;letter-spacing:0.3px;">$21.00</div>
<div class="t" style="right:1112.00px;top:608.30px;font-size:12.4px;line-height:12.4px;color:#3a8db0;letter-spacing:0.3px;">$21.00</div>
<div class="t" style="right:1018.40px;top:608.30px;font-size:12.4px;line-height:12.4px;color:#3a8db0;letter-spacing:0.3px;">$420.00</div>
<div class="b" style="left:41px;top:653.00px;width:841px;height:1px;background:#b0deea;"></div>
<div class="t" style="left:52.90px;top:639.31px;font-size:12.4px;line-height:12.4px;color:#3a8db0;">Invoice 3-456-1 Data 22</div>
<div class="t" style="left:232.40px;top:639.31px;font-size:12.4px;line-height:12.4px;color:#3a8db0;letter-spacing:0.25px;">3-456-1</div>
<div class="t" style="left:347.60px;top:639.31px;font-size:12.4px;line-height:12.4px;color:#3a8db0;">22</div>
<div class="t" style="right:1342.60px;top:633.11px;font-size:12.4px;line-height:12.4px;color:#3a8db0;letter-spacing:0.3px;">22</div>
<div class="t" style="right:1226.40px;top:633.11px;font-size:12.4px;line-height:12.4px;color:#3a8db0;letter-spacing:0.3px;">$22.00</div>
<div class="t" style="right:1112.00px;top:633.11px;font-size:12.4px;line-height:12.4px;color:#3a8db0;letter-spacing:0.3px;">$22.00</div>
<div class="t" style="right:1018.40px;top:633.11px;font-size:12.4px;line-height:12.4px;color:#3a8db0;letter-spacing:0.3px;">$462.00</div>
<div class="b" style="left:41px;top:654.00px;width:841px;height:24px;background:#d3ecf3;"></div>
<div class="b" style="left:41px;top:678.00px;width:841px;height:1px;background:#b0deea;"></div>
<div class="t" style="left:52.90px;top:664.12px;font-size:12.4px;line-height:12.4px;color:#3a8db0;">Invoice 3-456-1 Data 23</div>
<div class="t" style="left:232.40px;top:664.12px;font-size:12.4px;line-height:12.4px;color:#3a8db0;letter-spacing:0.25px;">3-456-1</div>
<div class="t" style="left:347.60px;top:664.12px;font-size:12.4px;line-height:12.4px;color:#3a8db0;">23</div>
<div class="t" style="right:1342.60px;top:657.92px;font-size:12.4px;line-height:12.4px;color:#3a8db0;letter-spacing:0.3px;">23</div>
<div class="t" style="right:1226.40px;top:657.92px;font-size:12.4px;line-height:12.4px;color:#3a8db0;letter-spacing:0.3px;">$23.00</div>
<div class="t" style="right:1112.00px;top:657.92px;font-size:12.4px;line-height:12.4px;color:#3a8db0;letter-spacing:0.3px;">$23.00</div>
<div class="t" style="right:1018.40px;top:657.92px;font-size:12.4px;line-height:12.4px;color:#3a8db0;letter-spacing:0.3px;">$506.00</div>
<div class="b" style="left:41px;top:703.00px;width:841px;height:1px;background:#b0deea;"></div>
<div class="t" style="left:52.90px;top:688.93px;font-size:12.4px;line-height:12.4px;color:#3a8db0;">Invoice 3-456-1 Data 24</div>
<div class="t" style="left:232.40px;top:688.93px;font-size:12.4px;line-height:12.4px;color:#3a8db0;letter-spacing:0.25px;">3-456-1</div>
<div class="t" style="left:347.60px;top:688.93px;font-size:12.4px;line-height:12.4px;color:#3a8db0;">24</div>
<div class="t" style="right:1342.60px;top:682.73px;font-size:12.4px;line-height:12.4px;color:#3a8db0;letter-spacing:0.3px;">24</div>
<div class="t" style="right:1226.40px;top:682.73px;font-size:12.4px;line-height:12.4px;color:#3a8db0;letter-spacing:0.3px;">$24.00</div>
<div class="t" style="right:1112.00px;top:682.73px;font-size:12.4px;line-height:12.4px;color:#3a8db0;letter-spacing:0.3px;">$24.00</div>
<div class="t" style="right:1018.40px;top:682.73px;font-size:12.4px;line-height:12.4px;color:#3a8db0;letter-spacing:0.3px;">$552.00</div>
<div class="b" style="left:41px;top:704.00px;width:841px;height:24px;background:#d3ecf3;"></div>
<div class="b" style="left:41px;top:728.00px;width:841px;height:1px;background:#b0deea;"></div>
<div class="t" style="left:52.90px;top:713.74px;font-size:12.4px;line-height:12.4px;color:#3a8db0;">Invoice 3-456-1 Data 25</div>
<div class="t" style="left:222.60px;top:713.74px;font-size:12.4px;line-height:12.4px;color:#3a8db0;letter-spacing:0.25px;">3-456-1</div>
<div class="t" style="left:347.60px;top:713.74px;font-size:12.4px;line-height:12.4px;color:#3a8db0;">25</div>
<div class="t" style="right:1342.60px;top:707.54px;font-size:12.4px;line-height:12.4px;color:#3a8db0;letter-spacing:0.3px;">25</div>
<div class="t" style="right:1226.40px;top:707.54px;font-size:12.4px;line-height:12.4px;color:#3a8db0;letter-spacing:0.3px;">$25.00</div>
<div class="t" style="right:1112.00px;top:707.54px;font-size:12.4px;line-height:12.4px;color:#3a8db0;letter-spacing:0.3px;">$25.00</div>
<div class="t" style="right:1018.40px;top:707.54px;font-size:12.4px;line-height:12.4px;color:#3a8db0;letter-spacing:0.3px;">$600.00</div>
<div class="b" style="left:41px;top:752.00px;width:841px;height:1px;background:#b0deea;"></div>
<div class="t" style="left:52.90px;top:738.55px;font-size:12.4px;line-height:12.4px;color:#3a8db0;">Invoice 3-456-2 Data 1</div>
<div class="t" style="left:232.40px;top:738.55px;font-size:12.4px;line-height:12.4px;color:#3a8db0;letter-spacing:0.25px;">3-456-2</div>
<div class="t" style="left:346.40px;top:738.55px;font-size:12.4px;line-height:12.4px;color:#3a8db0;">Z4567</div>
<div class="t" style="right:1342.60px;top:732.35px;font-size:12.4px;line-height:12.4px;color:#3a8db0;letter-spacing:0.3px;">39</div>
<div class="t" style="right:1226.40px;top:732.35px;font-size:12.4px;line-height:12.4px;color:#3a8db0;letter-spacing:0.3px;">$5.00</div>
<div class="t" style="right:1018.40px;top:732.35px;font-size:12.4px;line-height:12.4px;color:#3a8db0;letter-spacing:0.3px;">$195.00</div>
<div class="b" style="left:41px;top:753.00px;width:841px;height:24px;background:#d3ecf3;"></div>
<div class="b" style="left:41px;top:777.00px;width:841px;height:1px;background:#b0deea;"></div>
<div class="t" style="left:52.90px;top:763.36px;font-size:12.4px;line-height:12.4px;color:#3a8db0;">Invoice 3-456-2 Data 2</div>
<div class="t" style="left:232.40px;top:763.36px;font-size:12.4px;line-height:12.4px;color:#3a8db0;letter-spacing:0.25px;">3-456-2</div>
<div class="t" style="left:346.40px;top:763.36px;font-size:12.4px;line-height:12.4px;color:#3a8db0;">Z4568</div>
<div class="t" style="right:1342.60px;top:757.16px;font-size:12.4px;line-height:12.4px;color:#3a8db0;letter-spacing:0.3px;">40</div>
<div class="t" style="right:1226.40px;top:757.16px;font-size:12.4px;line-height:12.4px;color:#3a8db0;letter-spacing:0.3px;">$4.00</div>
<div class="t" style="right:1112.00px;top:757.16px;font-size:12.4px;line-height:12.4px;color:#3a8db0;letter-spacing:0.3px;">$5.00</div>
<div class="t" style="right:1018.40px;top:757.16px;font-size:12.4px;line-height:12.4px;color:#3a8db0;letter-spacing:0.3px;">$155.00</div>
<div class="b" style="left:41px;top:802.00px;width:841px;height:1px;background:#b0deea;"></div>
<div class="t" style="left:52.90px;top:788.17px;font-size:12.4px;line-height:12.4px;color:#3a8db0;">Invoice 3-456-2 Data 3</div>
<div class="t" style="left:232.40px;top:788.17px;font-size:12.4px;line-height:12.4px;color:#3a8db0;letter-spacing:0.25px;">3-456-2</div>
<div class="t" style="left:346.40px;top:788.17px;font-size:12.4px;line-height:12.4px;color:#3a8db0;">Z4569</div>
<div class="t" style="right:1342.60px;top:781.97px;font-size:12.4px;line-height:12.4px;color:#3a8db0;letter-spacing:0.3px;">30</div>
<div class="t" style="right:1226.40px;top:781.97px;font-size:12.4px;line-height:12.4px;color:#3a8db0;letter-spacing:0.3px;">$6.00</div>
<div class="t" style="right:1112.00px;top:781.97px;font-size:12.4px;line-height:12.4px;color:#3a8db0;letter-spacing:0.3px;">$7.00</div>
<div class="t" style="right:1018.40px;top:781.97px;font-size:12.4px;line-height:12.4px;color:#3a8db0;letter-spacing:0.3px;">$173.00</div>
<div class="b" style="left:41px;top:803.00px;width:841px;height:24px;background:#d3ecf3;"></div>
<div class="b" style="left:41px;top:827.00px;width:841px;height:1px;background:#b0deea;"></div>
<div class="t" style="left:52.90px;top:812.98px;font-size:12.4px;line-height:12.4px;color:#3a8db0;">Invoice 3-456-2 Data 4</div>
<div class="t" style="left:232.40px;top:812.98px;font-size:12.4px;line-height:12.4px;color:#3a8db0;letter-spacing:0.25px;">3-456-2</div>
<div class="t" style="left:346.40px;top:812.98px;font-size:12.4px;line-height:12.4px;color:#3a8db0;">Z4570</div>
<div class="t" style="right:1342.60px;top:806.78px;font-size:12.4px;line-height:12.4px;color:#3a8db0;letter-spacing:0.3px;">40</div>
<div class="t" style="right:1226.40px;top:806.78px;font-size:12.4px;line-height:12.4px;color:#3a8db0;letter-spacing:0.3px;">$7.00</div>
<div class="t" style="right:1018.40px;top:806.78px;font-size:12.4px;line-height:12.4px;color:#3a8db0;letter-spacing:0.3px;">$280.00</div>
<div class="b" style="left:41px;top:852.00px;width:841px;height:1px;background:#b0deea;"></div>
<div class="t" style="left:52.90px;top:837.79px;font-size:12.4px;line-height:12.4px;color:#3a8db0;">Invoice 3-456-2 Data 5</div>
<div class="t" style="left:232.40px;top:837.79px;font-size:12.4px;line-height:12.4px;color:#3a8db0;letter-spacing:0.25px;">3-456-2</div>
<div class="t" style="left:346.40px;top:837.79px;font-size:12.4px;line-height:12.4px;color:#3a8db0;">Z4571</div>
<div class="t" style="right:1342.60px;top:831.59px;font-size:12.4px;line-height:12.4px;color:#3a8db0;letter-spacing:0.3px;">10</div>
<div class="t" style="right:1226.40px;top:831.59px;font-size:12.4px;line-height:12.4px;color:#3a8db0;letter-spacing:0.3px;">$4.00</div>
<div class="t" style="right:1018.40px;top:831.59px;font-size:12.4px;line-height:12.4px;color:#3a8db0;letter-spacing:0.3px;">$40.00</div>
<div class="b" style="left:41px;top:853.00px;width:841px;height:24px;background:#d3ecf3;"></div>
<div class="b" style="left:41px;top:877.00px;width:841px;height:1px;background:#b0deea;"></div>
<div class="t" style="left:52.90px;top:862.60px;font-size:12.4px;line-height:12.4px;color:#3a8db0;">Invoice 3-456-2 Data 6</div>
<div class="t" style="left:232.40px;top:862.60px;font-size:12.4px;line-height:12.4px;color:#3a8db0;letter-spacing:0.25px;">3-456-2</div>
<div class="t" style="left:346.40px;top:862.60px;font-size:12.4px;line-height:12.4px;color:#3a8db0;">Z4572</div>
<div class="t" style="right:1342.60px;top:856.40px;font-size:12.4px;line-height:12.4px;color:#3a8db0;letter-spacing:0.3px;">5</div>
<div class="t" style="right:1226.40px;top:856.40px;font-size:12.4px;line-height:12.4px;color:#3a8db0;letter-spacing:0.3px;">$8.00</div>
<div class="t" style="right:1018.40px;top:856.40px;font-size:12.4px;line-height:12.4px;color:#3a8db0;letter-spacing:0.3px;">$40.00</div>
<div class="b" style="left:41px;top:901.00px;width:841px;height:1px;background:#b0deea;"></div>
<div class="t" style="left:52.90px;top:887.41px;font-size:12.4px;line-height:12.4px;color:#3a8db0;">Invoice 3-456-2 Data 7</div>
<div class="t" style="left:232.40px;top:887.41px;font-size:12.4px;line-height:12.4px;color:#3a8db0;letter-spacing:0.25px;">3-456-2</div>
<div class="t" style="left:346.40px;top:887.41px;font-size:12.4px;line-height:12.4px;color:#3a8db0;">Z4573</div>
<div class="t" style="right:1342.60px;top:881.21px;font-size:12.4px;line-height:12.4px;color:#3a8db0;letter-spacing:0.3px;">70</div>
<div class="t" style="right:1226.40px;top:881.21px;font-size:12.4px;line-height:12.4px;color:#3a8db0;letter-spacing:0.3px;">$6.00</div>
<div class="t" style="right:1018.40px;top:881.21px;font-size:12.4px;line-height:12.4px;color:#3a8db0;letter-spacing:0.3px;">$420.00</div>
<div class="b" style="left:41px;top:902.00px;width:841px;height:24px;background:#d3ecf3;"></div>
<div class="b" style="left:41px;top:926.00px;width:841px;height:1px;background:#b0deea;"></div>
<div class="t" style="left:52.90px;top:912.22px;font-size:12.4px;line-height:12.4px;color:#3a8db0;">Invoice 3-456-2 Data 8</div>
<div class="t" style="left:232.40px;top:912.22px;font-size:12.4px;line-height:12.4px;color:#3a8db0;letter-spacing:0.25px;">3-456-2</div>
<div class="t" style="left:346.40px;top:912.22px;font-size:12.4px;line-height:12.4px;color:#3a8db0;">Z4574</div>
<div class="t" style="right:1342.60px;top:906.02px;font-size:12.4px;line-height:12.4px;color:#3a8db0;letter-spacing:0.3px;">25</div>
<div class="t" style="right:1226.40px;top:906.02px;font-size:12.4px;line-height:12.4px;color:#3a8db0;letter-spacing:0.3px;">$4.00</div>
<div class="t" style="right:1018.40px;top:906.02px;font-size:12.4px;line-height:12.4px;color:#3a8db0;letter-spacing:0.3px;">$100.00</div>
<div class="b" style="left:41px;top:108.00px;width:1px;height:800px;background:#b0deea;"></div>
<div class="b" style="left:220px;top:108.00px;width:1px;height:800px;background:#b0deea;"></div>
<div class="b" style="left:334px;top:108.00px;width:1px;height:800px;background:#b0deea;"></div>
<div class="b" style="left:445px;top:108.00px;width:1px;height:800px;background:#b0deea;"></div>
<div class="b" style="left:561px;top:108.00px;width:1px;height:800px;background:#b0deea;"></div>
<div class="b" style="left:673px;top:108.00px;width:1px;height:800px;background:#b0deea;"></div>
<div class="b" style="left:788px;top:108.00px;width:1px;height:800px;background:#b0deea;"></div>
<div class="b" style="left:881px;top:108.00px;width:1px;height:800px;background:#b0deea;"></div>
</div>
<div class="b" style="left:25px;top:205px;width:17px;height:44px;background:none;border:2px solid #217346;"></div>
<div class="b" style="left:39px;top:245px;width:5px;height:5px;background:#217346;border:1px solid #fff;"></div>
<div class="b" style="left:1898px;top:188px;width:15px;height:926px;background:#e6e6e6;"></div>
<div class="b" style="left:1898px;top:206px;width:1px;height:908px;background:#a0a0a0;"></div>
<div class="b" style="left:1901px;top:190px;width:12px;height:15px;background:#fff;border:1px solid #c6c6c6;border-right:none;"></div>
<svg class="s" style="left:1903px;top:194px;" width="9" height="5" viewBox="0 0 9 5"><path d="M0 5H9L4.5 0.5Z" fill="#666"/></svg>
<div class="b" style="left:1901px;top:205px;width:12px;height:804px;background:#fff;border-left:1px solid #b0b0b0;"></div>
<div class="b" style="left:1901px;top:1009px;width:12px;height:91px;background:#dadada;border-left:1px solid #b0b0b0;"></div>
<div class="b" style="left:1901px;top:1100px;width:12px;height:14px;background:#fff;border:1px solid #c6c6c6;border-right:none;"></div>
<svg class="s" style="left:1903px;top:1106px;" width="9" height="5" viewBox="0 0 9 5"><path d="M0 0H9L4.5 4.5Z" fill="#666"/></svg>
<div class="b" style="left:0px;top:1114px;width:1913px;height:24px;background:#e4e4e4;"></div>
<div class="b" style="left:0px;top:1114px;width:1913px;height:1px;background:#ababab;"></div>
<div class="b" style="left:0px;top:1137px;width:1913px;height:1px;background:#c6c6c6;"></div>
<svg class="s" style="left:20px;top:1121px;" width="5" height="9" viewBox="0 0 5 9"><path d="M5 0V9L0.5 4.5Z" fill="#c0c0c0"/></svg>
<svg class="s" style="left:43px;top:1121px;" width="5" height="9" viewBox="0 0 5 9"><path d="M0 0V9L4.5 4.5Z" fill="#c0c0c0"/></svg>
<div class="b" style="left:80px;top:1116px;width:2px;height:19px;background:#c8c8c8;"></div>
<div class="b" style="left:83px;top:1116px;width:213px;height:19px;background:#1b4f5e;"></div>
<div class="t " style="left:94.50px;top:1116.49px;font-size:13.6px;line-height:13.6px;color:#fff;">How to use the Invoice Tracker</div>
<div class="b" style="left:297px;top:1116px;width:2px;height:19px;background:#c8c8c8;"></div>
<div class="b" style="left:300px;top:1116px;width:60px;height:19px;background:#22758d;"></div>
<div class="t " style="left:308.00px;top:1116.49px;font-size:13.6px;line-height:13.6px;color:#fff;">Invoice</div>
<div class="b" style="left:361px;top:1116px;width:2px;height:19px;background:#c8c8c8;"></div>
<div class="b" style="left:364px;top:1116px;width:82px;height:19px;background:#2a9bbb;"></div>
<div class="t " style="left:371.50px;top:1116.49px;font-size:13.6px;line-height:13.6px;color:#0f2f3a;">Customers</div>
<div class="b" style="left:447px;top:1116px;width:2px;height:19px;background:#c8c8c8;"></div>
<div class="b" style="left:450px;top:1116px;width:112px;height:19px;background:#7ac7de;"></div>
<div class="t " style="left:459.00px;top:1116.49px;font-size:13.6px;line-height:13.6px;color:#17323c;">Invoices - Main</div>
<div class="b" style="left:563px;top:1114px;width:112px;height:21px;background:linear-gradient(#ffffff 55%,#dcecf0);"></div>
<div class="b" style="left:563px;top:1133px;width:112px;height:2px;background:#217346;"></div>
<div class="t " style="left:573.00px;top:1116.03px;font-size:13.2px;line-height:13.2px;color:#217346;font-weight:bold;">Invoice Details</div>
<svg class="s" style="left:701px;top:1118px;" width="17" height="17" viewBox="0 0 17 17"><circle cx="8.5" cy="8.5" r="7.6" fill="none" stroke="#777" stroke-width="1.2"/><path d="M8.5 4V13M4 8.5H13" stroke="#666" stroke-width="1.3"/></svg>
<svg class="s" style="left:1148px;top:1121px;" width="3" height="10" viewBox="0 0 3 10"><circle cx="1.5" cy="1" r="1" fill="#999"/><circle cx="1.5" cy="5" r="1" fill="#999"/><circle cx="1.5" cy="9" r="1" fill="#999"/></svg>
<div class="b" style="left:1162px;top:1118px;width:16px;height:15px;background:#fff;border:1px solid #c6c6c6;"></div>
<svg class="s" style="left:1166px;top:1121px;" width="5" height="9" viewBox="0 0 5 9"><path d="M5 0V9L0.5 4.5Z" fill="#555"/></svg>
<div class="b" style="left:1177px;top:1118px;width:677px;height:15px;background:#fff;border:1px solid #b8b8b8;border-left:2px solid #999;"></div>
<div class="b" style="left:1853px;top:1118px;width:30px;height:15px;background:#d8d8d8;"></div>
<div class="b" style="left:1883px;top:1118px;width:15px;height:15px;background:#fff;border:1px solid #c6c6c6;"></div>
<svg class="s" style="left:1889px;top:1121px;" width="5" height="9" viewBox="0 0 5 9"><path d="M0 0V9L4.5 4.5Z" fill="#555"/></svg>
<div class="b" style="left:0px;top:1138px;width:1913px;height:20px;background:#f1f1f1;"></div>
<div class="b" style="left:0px;top:1158px;width:1913px;height:1px;background:#222;"></div>
<div class="t " style="left:3.80px;top:1143.58px;font-size:10.3px;line-height:10.3px;color:#555;">Ready</div>
<div class="b" style="left:1648px;top:1138px;width:33px;height:20px;background:#d6d6d6;"></div>
<svg class="s" style="left:1658px;top:1142px;" width="12" height="11" viewBox="0 0 12 11"><path d="M0.5 0.5H11.5V10.5H0.5ZM0.5 3.5H11.5M0.5 7H11.5M4 0.5V10.5M7.5 0.5V10.5" fill="none" stroke="#666" stroke-width="1"/></svg>
<svg class="s" style="left:1690px;top:1142px;" width="13" height="11" viewBox="0 0 13 11"><rect x="0.5" y="0.5" width="12" height="10" fill="none" stroke="#777"/><rect x="3.5" y="2.5" width="6" height="6" fill="none" stroke="#777"/><path d="M5 4.5H8M5 6.5H8" stroke="#777"/></svg>
<svg class="s" style="left:1724px;top:1142px;" width="12" height="11" viewBox="0 0 12 11"><rect x="0.5" y="0.5" width="11" height="10" fill="none" stroke="#777"/><path d="M3.5 0.5V4.5M6.5 0.5V4.5M0.5 6.5H11.5" fill="none" stroke="#777"/></svg>
<div class="b" style="left:1751px;top:1147px;width:8px;height:2px;background:#555;"></div>
<div class="b" style="left:1761px;top:1147px;width:100px;height:1px;background:#c6c6c6;"></div>
<div class="b" style="left:1809px;top:1142px;width:4px;height:11px;background:#555;"></div>
<svg class="s" style="left:1864px;top:1142px;" width="10" height="10" viewBox="0 0 10 10"><path d="M5 0V10M0 5H10" stroke="#555" stroke-width="1.6"/></svg>
<div class="t " style="left:1886.30px;top:1143.67px;font-size:10.2px;line-height:10.2px;color:#555;">100%</div>
</body></html>
